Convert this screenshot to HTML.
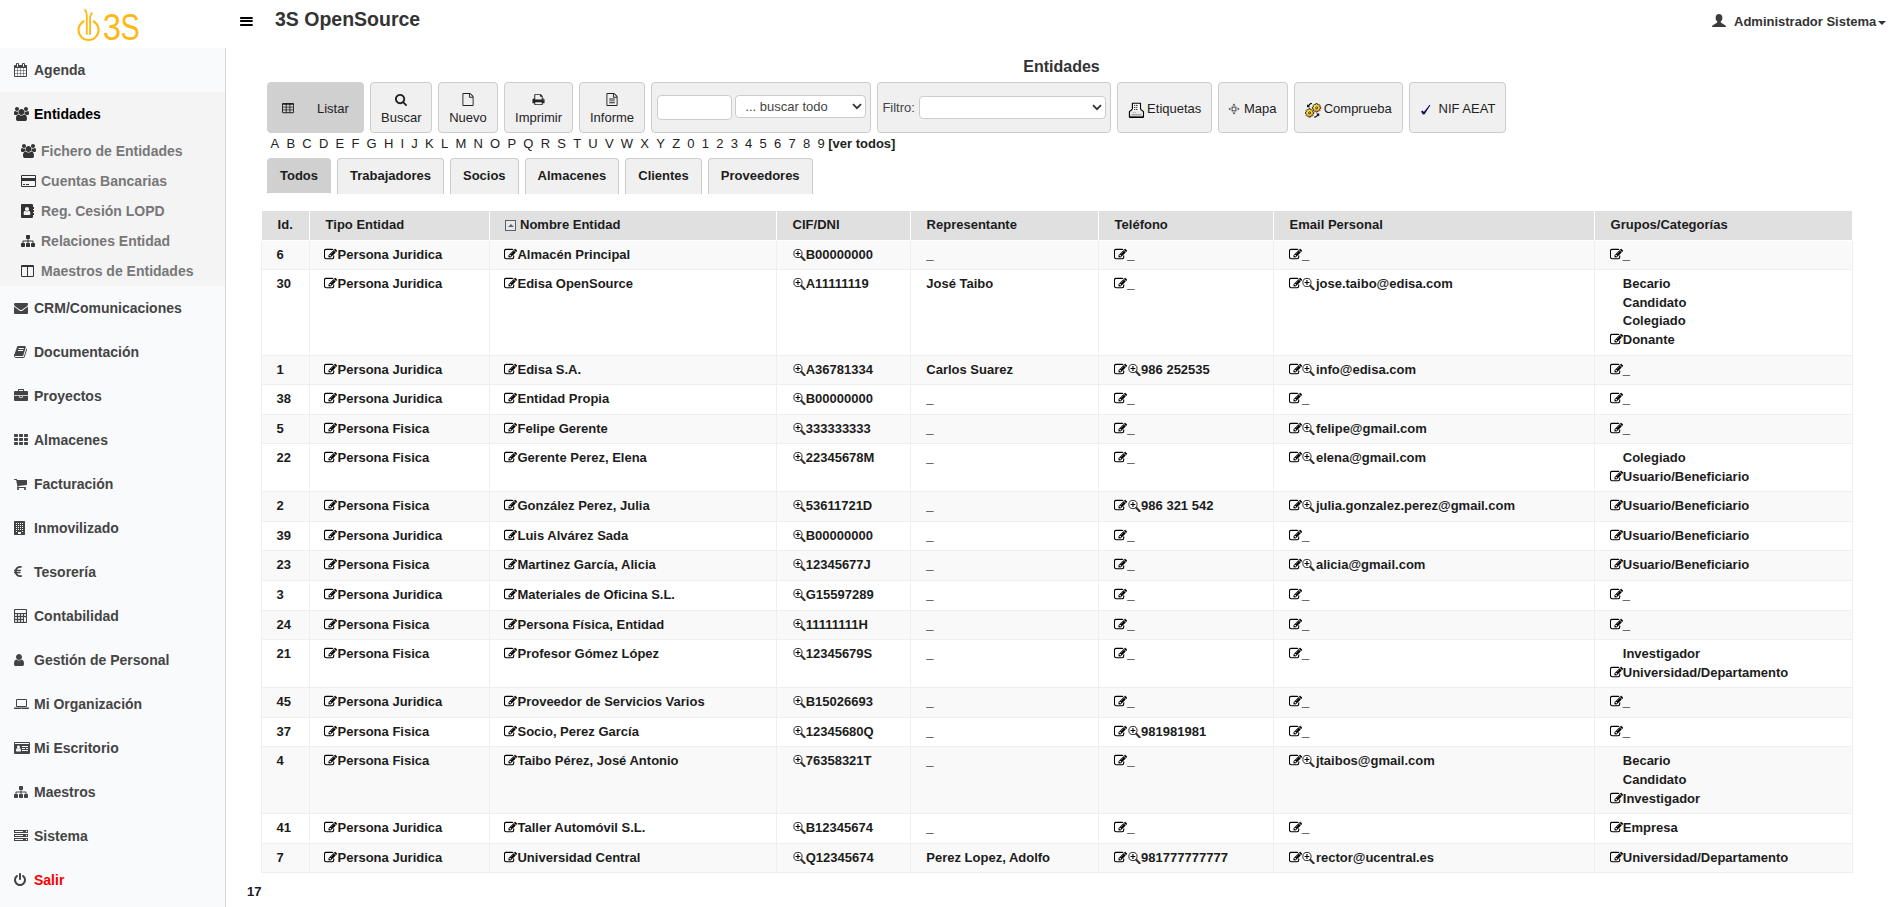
<!DOCTYPE html>
<html lang="es"><head><meta charset="utf-8"><title>3S OpenSource - Entidades</title>
<style>
*{box-sizing:border-box}
html,body{margin:0;padding:0}
body{width:1900px;height:907px;overflow:hidden;position:relative;background:#fff;font-family:"Liberation Sans",Arial,Helvetica,sans-serif;font-size:13px;line-height:1.42857;color:#1c1c1c}
a{color:inherit;text-decoration:none}
ul{list-style:none;margin:0;padding:0}
.fa{display:inline-block;background:currentColor;vertical-align:-0.143em;flex:none}
.i-calendar-14{width:13px;height:14px;clip-path:path("M1 13V10.75H3.25V13ZM3.75 13V10.75H6.25V13ZM1 10.25V7.75H3.25V10.25ZM3.75 10.25V7.75H6.25V10.25ZM1 7.25V5H3.25V7.25ZM6.75 13V10.75H9.25V13ZM3.75 7.25V5H6.25V7.25ZM9.75 13V10.75H12V13ZM6.75 10.25V7.75H9.25V10.25ZM4 3.5C4 3.63 3.88 3.75 3.75 3.75H3.25C3.12 3.75 3 3.63 3 3.5V1.25C3 1.12 3.12 1 3.25 1H3.75C3.88 1 4 1.12 4 1.25V3.5ZM9.75 10.25V7.75H12V10.25ZM6.75 7.25V5H9.25V7.25ZM9.75 7.25V5H12V7.25ZM10 3.5C10 3.63 9.88 3.75 9.75 3.75H9.25C9.12 3.75 9 3.63 9 3.5V1.25C9 1.12 9.12 1 9.25 1H9.75C9.88 1 10 1.12 10 1.25V3.5ZM13 3C13 2.45 12.55 2 12 2H11V1.25C11 0.56 10.44 0 9.75 0H9.25C8.56 0 8 0.56 8 1.25V2H5V1.25C5 0.56 4.44 0 3.75 0H3.25C2.56 0 2 0.56 2 1.25V2H1C0.45 2 0 2.45 0 3V13C0 13.55 0.45 14 1 14H12C12.55 14 13 13.55 13 13Z")}
.i-users-14{width:15px;height:14px;clip-path:path("M4.63 7C4.23 6.41 4 5.71 4 5C4 4.83 4.02 4.66 4.04 4.48C3.7 4.6 3.36 4.66 3 4.66C1.95 4.66 1.13 4 0.97 4C-0.02 4 0 6.12 0 6.76C0 7.62 0.73 8 1.52 8H2.56C3.09 7.38 3.82 7.02 4.63 7ZM13 11.98C13 10.21 12.59 7.5 10.3 7.5C10.03 7.5 9.06 8.59 7.5 8.59C5.94 8.59 4.97 7.5 4.7 7.5C2.41 7.5 2 10.21 2 11.98C2 13.24 2.84 14 4.09 14H10.91C12.16 14 13 13.24 13 11.98ZM5 2C5 0.9 4.1 0 3 0C1.9 0 1 0.9 1 2C1 3.1 1.9 4 3 4C4.1 4 5 3.1 5 2ZM10.5 5C10.5 3.34 9.16 2 7.5 2C5.84 2 4.5 3.34 4.5 5C4.5 6.66 5.84 8 7.5 8C9.16 8 10.5 6.66 10.5 5ZM15 6.76C15 6.12 15.02 4 14.03 4C13.87 4 13.05 4.66 12 4.66C11.64 4.66 11.3 4.6 10.96 4.48C10.98 4.66 11 4.83 11 5C11 5.71 10.77 6.41 10.37 7C11.18 7.02 11.91 7.38 12.44 8H13.48C14.27 8 15 7.62 15 6.76ZM14 2C14 0.9 13.1 0 12 0C10.9 0 10 0.9 10 2C10 3.1 10.9 4 12 4C13.1 4 14 3.1 14 2Z")}
.i-credit-card-14{width:15px;height:14px;clip-path:path("M13.75 1H1.25C0.56 1 0 1.56 0 2.25V11.75C0 12.44 0.56 13 1.25 13H13.75C14.44 13 15 12.44 15 11.75V2.25C15 1.56 14.44 1 13.75 1ZM1.25 2H13.75C13.88 2 14 2.12 14 2.25V4H1V2.25C1 2.12 1.12 2 1.25 2ZM13.75 12H1.25C1.12 12 1 11.88 1 11.75V7H14V11.75C14 11.88 13.88 12 13.75 12ZM2 11H4V10H2ZM5 11H8V10H5Z")}
.i-address-book-14{width:13px;height:14px;clip-path:path("M9.38 9.67C9.38 10.45 8.88 11 8.25 11H3.75C3.12 11 2.62 10.45 2.62 9.67C2.62 8.29 2.95 6.75 4.34 6.75C4.77 7 5.36 7.43 6 7.43C6.64 7.43 7.23 7 7.66 6.75C9.05 6.75 9.38 8.29 9.38 9.67ZM8.03 5.03C8.03 6.15 7.12 7.05 6 7.05C4.88 7.05 3.97 6.15 3.97 5.03C3.97 3.91 4.88 3 6 3C7.12 3 8.03 3.91 8.03 5.03ZM13 9.25C13 9.11 12.89 9 12.75 9H12V8H12.75C12.89 8 13 7.89 13 7.75V6.25C13 6.11 12.89 6 12.75 6H12V5H12.75C12.89 5 13 4.89 13 4.75V3.25C13 3.11 12.89 3 12.75 3H12V1.25C12 0.56 11.44 0 10.75 0H1.25C0.56 0 0 0.56 0 1.25V12.75C0 13.44 0.56 14 1.25 14H10.75C11.44 14 12 13.44 12 12.75V11H12.75C12.89 11 13 10.89 13 10.75Z")}
.i-sitemap-14{width:14px;height:14px;clip-path:path("M14 9.75C14 9.34 13.66 9 13.25 9H12.5V7.5C12.5 6.95 12.05 6.5 11.5 6.5H7.5V5H8.25C8.66 5 9 4.66 9 4.25V1.75C9 1.34 8.66 1 8.25 1H5.75C5.34 1 5 1.34 5 1.75V4.25C5 4.66 5.34 5 5.75 5H6.5V6.5H2.5C1.95 6.5 1.5 6.95 1.5 7.5V9H0.75C0.34 9 0 9.34 0 9.75V12.25C0 12.66 0.34 13 0.75 13H3.25C3.66 13 4 12.66 4 12.25V9.75C4 9.34 3.66 9 3.25 9H2.5V7.5H6.5V9H5.75C5.34 9 5 9.34 5 9.75V12.25C5 12.66 5.34 13 5.75 13H8.25C8.66 13 9 12.66 9 12.25V9.75C9 9.34 8.66 9 8.25 9H7.5V7.5H11.5V9H10.75C10.34 9 10 9.34 10 9.75V12.25C10 12.66 10.34 13 10.75 13H13.25C13.66 13 14 12.66 14 12.25Z")}
.i-columns-14{width:13px;height:14px;clip-path:path("M1.25 12C1.12 12 1 11.88 1 11.75V3H6V12ZM12 11.75C12 11.88 11.88 12 11.75 12H7V3H12V11.75ZM13 2.25C13 1.56 12.44 1 11.75 1H1.25C0.56 1 0 1.56 0 2.25V11.75C0 12.44 0.56 13 1.25 13H11.75C12.44 13 13 12.44 13 11.75Z")}
.i-envelope-14{width:14px;height:14px;clip-path:path("M14 5.55C13.77 5.8 13.5 6.03 13.22 6.23C11.91 7.11 10.6 8 9.33 8.92C8.67 9.41 7.86 10 7.01 10H7H6.99C6.14 10 5.33 9.41 4.67 8.92C3.4 7.99 2.09 7.11 0.79 6.23C0.5 6.03 0.23 5.8 0 5.55V11.75C0 12.44 0.56 13 1.25 13H12.75C13.44 13 14 12.44 14 11.75ZM14 3.25C14 2.56 13.43 2 12.75 2H1.25C0.41 2 0 2.66 0 3.42C0 4.13 0.79 5.02 1.34 5.39C2.55 6.23 3.78 7.08 4.99 7.93C5.5 8.28 6.36 9 6.99 9H7H7.01C7.64 9 8.5 8.28 9.01 7.93C10.22 7.08 11.45 6.23 12.66 5.39C13.35 4.91 14 4.12 14 3.25Z")}
.i-book-14{width:13px;height:14px;clip-path:path("M12.8 3.73C12.69 3.58 12.52 3.47 12.34 3.4C12.35 3.54 12.35 3.7 12.3 3.84L9.96 11.55C9.88 11.84 9.54 12 9.25 12H2.04C1.61 12 1.07 11.91 0.91 11.45C0.85 11.28 0.86 11.21 0.92 11.12C0.99 11.02 1.12 11 1.22 11H8.01C9 11 9.2 10.73 9.57 9.53L11.71 2.45C11.82 2.09 11.77 1.72 11.57 1.44C11.38 1.16 11.05 1 10.68 1H4.73C4.6 1 4.47 1.04 4.34 1.07L4.34 1.05C3.35 0.77 3.29 1.84 2.96 2.32C2.84 2.5 2.65 2.66 2.62 2.8C2.59 2.95 2.67 3.08 2.66 3.21C2.61 3.62 2.3 4.37 2.11 4.62C1.99 4.78 1.82 4.86 1.77 5.04C1.72 5.16 1.8 5.34 1.78 5.51C1.74 5.88 1.47 6.57 1.26 6.93C1.18 7.07 1.03 7.18 0.99 7.33C0.95 7.46 1.03 7.63 0.99 7.78C0.91 8.19 0.64 8.82 0.41 9.21C0.28 9.42 0.12 9.55 0.09 9.74C0.07 9.84 0.14 9.94 0.13 10.06C0.12 10.25 0.09 10.41 0.08 10.56C-0.03 10.86 -0.03 11.2 0.09 11.55C0.38 12.37 1.23 13 2.03 13H9.24C9.91 13 10.6 12.48 10.8 11.82L12.95 4.74C13.05 4.38 13 4.02 12.8 3.73ZM4.49 3.75 4.66 3.25C4.7 3.11 4.85 3 4.98 3H9.73C9.88 3 9.95 3.11 9.91 3.25L9.74 3.75C9.7 3.89 9.55 4 9.41 4H4.66C4.52 4 4.45 3.89 4.49 3.75ZM3.84 5.75 4.01 5.25C4.05 5.11 4.2 5 4.34 5H9.09C9.23 5 9.3 5.11 9.26 5.25L9.09 5.75C9.05 5.89 8.9 6 8.77 6H4.02C3.88 6 3.8 5.89 3.84 5.75Z")}
.i-briefcase-14{width:14px;height:14px;clip-path:path("M5 2V1H9V2ZM14 7H8.75V8.25C8.75 8.52 8.52 8.75 8.25 8.75H5.75C5.48 8.75 5.25 8.52 5.25 8.25V7H0V10.75C0 11.44 0.56 12 1.25 12H12.75C13.44 12 14 11.44 14 10.75ZM8 7H6V8H8ZM14 3.25C14 2.56 13.44 2 12.75 2H10V0.75C10 0.34 9.66 0 9.25 0H4.75C4.34 0 4 0.34 4 0.75V2H1.25C0.56 2 0 2.56 0 3.25V6.25H14Z")}
.i-th-14{width:14px;height:14px;clip-path:path("M4 9.75C4 9.34 3.66 9 3.25 9H0.75C0.34 9 0 9.34 0 9.75V11.25C0 11.66 0.34 12 0.75 12H3.25C3.66 12 4 11.66 4 11.25ZM4 5.75C4 5.34 3.66 5 3.25 5H0.75C0.34 5 0 5.34 0 5.75V7.25C0 7.66 0.34 8 0.75 8H3.25C3.66 8 4 7.66 4 7.25ZM9 9.75C9 9.34 8.66 9 8.25 9H5.75C5.34 9 5 9.34 5 9.75V11.25C5 11.66 5.34 12 5.75 12H8.25C8.66 12 9 11.66 9 11.25ZM4 1.75C4 1.34 3.66 1 3.25 1H0.75C0.34 1 0 1.34 0 1.75V3.25C0 3.66 0.34 4 0.75 4H3.25C3.66 4 4 3.66 4 3.25ZM9 5.75C9 5.34 8.66 5 8.25 5H5.75C5.34 5 5 5.34 5 5.75V7.25C5 7.66 5.34 8 5.75 8H8.25C8.66 8 9 7.66 9 7.25ZM14 9.75C14 9.34 13.66 9 13.25 9H10.75C10.34 9 10 9.34 10 9.75V11.25C10 11.66 10.34 12 10.75 12H13.25C13.66 12 14 11.66 14 11.25ZM9 1.75C9 1.34 8.66 1 8.25 1H5.75C5.34 1 5 1.34 5 1.75V3.25C5 3.66 5.34 4 5.75 4H8.25C8.66 4 9 3.66 9 3.25ZM14 5.75C14 5.34 13.66 5 13.25 5H10.75C10.34 5 10 5.34 10 5.75V7.25C10 7.66 10.34 8 10.75 8H13.25C13.66 8 14 7.66 14 7.25ZM14 1.75C14 1.34 13.66 1 13.25 1H10.75C10.34 1 10 1.34 10 1.75V3.25C10 3.66 10.34 4 10.75 4H13.25C13.66 4 14 3.66 14 3.25Z")}
.i-shopping-cart-14{width:13px;height:14px;clip-path:path("M5 12C5 11.45 4.55 11 4 11C3.45 11 3 11.45 3 12C3 12.55 3.45 13 4 13C4.55 13 5 12.55 5 12ZM12 12C12 11.45 11.55 11 11 11C10.45 11 10 11.45 10 12C10 12.55 10.45 13 11 13C11.55 13 12 12.55 12 12ZM13 3.5C13 3.23 12.77 3 12.5 3H3.12C3.04 2.62 3.02 2 2.5 2H0.5C0.23 2 0 2.23 0 2.5C0 2.77 0.23 3 0.5 3H2.09L3.48 9.43C3.35 9.67 3 10.26 3 10.5C3 10.77 3.23 11 3.5 11H11.5C11.77 11 12 10.77 12 10.5C12 10.23 11.77 10 11.5 10H4.31C4.39 9.84 4.5 9.68 4.5 9.5C4.5 9.31 4.44 9.13 4.4 8.95L12.55 8C12.8 7.97 13 7.75 13 7.5Z")}
.i-building-14{width:12px;height:14px;clip-path:path("M10.5 0H0.5C0.23 0 0 0.23 0 0.5V13.5C0 13.77 0.23 14 0.5 14H10.5C10.77 14 11 13.77 11 13.5V0.5C11 0.23 10.77 0 10.5 0ZM4 2.25C4 2.11 4.11 2 4.25 2H4.75C4.89 2 5 2.11 5 2.25V2.75C5 2.89 4.89 3 4.75 3H4.25C4.11 3 4 2.89 4 2.75ZM4 4.25C4 4.11 4.11 4 4.25 4H4.75C4.89 4 5 4.11 5 4.25V4.75C5 4.89 4.89 5 4.75 5H4.25C4.11 5 4 4.89 4 4.75ZM4 6.25C4 6.11 4.11 6 4.25 6H4.75C4.89 6 5 6.11 5 6.25V6.75C5 6.89 4.89 7 4.75 7H4.25C4.11 7 4 6.89 4 6.75ZM4 8.25C4 8.11 4.11 8 4.25 8H4.75C4.89 8 5 8.11 5 8.25V8.75C5 8.89 4.89 9 4.75 9H4.25C4.11 9 4 8.89 4 8.75ZM3 10.75C3 10.89 2.89 11 2.75 11H2.25C2.11 11 2 10.89 2 10.75V10.25C2 10.11 2.11 10 2.25 10H2.75C2.89 10 3 10.11 3 10.25ZM3 8.75C3 8.89 2.89 9 2.75 9H2.25C2.11 9 2 8.89 2 8.75V8.25C2 8.11 2.11 8 2.25 8H2.75C2.89 8 3 8.11 3 8.25ZM3 6.75C3 6.89 2.89 7 2.75 7H2.25C2.11 7 2 6.89 2 6.75V6.25C2 6.11 2.11 6 2.25 6H2.75C2.89 6 3 6.11 3 6.25ZM3 4.75C3 4.89 2.89 5 2.75 5H2.25C2.11 5 2 4.89 2 4.75V4.25C2 4.11 2.11 4 2.25 4H2.75C2.89 4 3 4.11 3 4.25ZM3 2.75C3 2.89 2.89 3 2.75 3H2.25C2.11 3 2 2.89 2 2.75V2.25C2 2.11 2.11 2 2.25 2H2.75C2.89 2 3 2.11 3 2.25ZM7 12.75C7 12.89 6.89 13 6.75 13H4.25C4.11 13 4 12.89 4 12.75V11.25C4 11.11 4.11 11 4.25 11H6.75C6.89 11 7 11.11 7 11.25ZM7 8.75C7 8.89 6.89 9 6.75 9H6.25C6.11 9 6 8.89 6 8.75V8.25C6 8.11 6.11 8 6.25 8H6.75C6.89 8 7 8.11 7 8.25ZM7 6.75C7 6.89 6.89 7 6.75 7H6.25C6.11 7 6 6.89 6 6.75V6.25C6 6.11 6.11 6 6.25 6H6.75C6.89 6 7 6.11 7 6.25ZM7 4.75C7 4.89 6.89 5 6.75 5H6.25C6.11 5 6 4.89 6 4.75V4.25C6 4.11 6.11 4 6.25 4H6.75C6.89 4 7 4.11 7 4.25ZM7 2.75C7 2.89 6.89 3 6.75 3H6.25C6.11 3 6 2.89 6 2.75V2.25C6 2.11 6.11 2 6.25 2H6.75C6.89 2 7 2.11 7 2.25ZM9 10.75C9 10.89 8.89 11 8.75 11H8.25C8.11 11 8 10.89 8 10.75V10.25C8 10.11 8.11 10 8.25 10H8.75C8.89 10 9 10.11 9 10.25ZM9 8.75C9 8.89 8.89 9 8.75 9H8.25C8.11 9 8 8.89 8 8.75V8.25C8 8.11 8.11 8 8.25 8H8.75C8.89 8 9 8.11 9 8.25ZM9 6.75C9 6.89 8.89 7 8.75 7H8.25C8.11 7 8 6.89 8 6.75V6.25C8 6.11 8.11 6 8.25 6H8.75C8.89 6 9 6.11 9 6.25ZM9 4.75C9 4.89 8.89 5 8.75 5H8.25C8.11 5 8 4.89 8 4.75V4.25C8 4.11 8.11 4 8.25 4H8.75C8.89 4 9 4.11 9 4.25ZM9 2.75C9 2.89 8.89 3 8.75 3H8.25C8.11 3 8 2.89 8 2.75V2.25C8 2.11 8.11 2 8.25 2H8.75C8.89 2 9 2.11 9 2.25Z")}
.i-eur-14{width:8px;height:14px;clip-path:path("M7.62 10.21C7.61 10.15 7.57 10.09 7.51 10.05C7.45 10.02 7.37 10.01 7.3 10.03C7.3 10.03 6.74 10.22 6.06 10.22C4.73 10.22 3.61 9.45 3.11 8.23H6.13C6.25 8.23 6.35 8.15 6.38 8.03L6.56 7.16C6.58 7.09 6.56 7.01 6.52 6.95C6.47 6.89 6.4 6.85 6.32 6.85H2.73C2.72 6.55 2.71 6.28 2.73 6.03H6.55C6.67 6.03 6.77 5.95 6.8 5.83L6.98 4.94C7 4.87 6.98 4.79 6.93 4.73C6.88 4.67 6.81 4.64 6.73 4.64H3.08C3.6 3.48 4.7 2.77 6.02 2.77C6.57 2.77 7.1 2.9 7.11 2.9C7.24 2.94 7.38 2.86 7.41 2.73L7.74 1.48C7.76 1.42 7.75 1.35 7.72 1.3C7.68 1.24 7.62 1.2 7.56 1.18C7.53 1.17 6.86 1 6.05 1C3.71 1 1.71 2.45 1.02 4.64H0.25C0.11 4.64 0 4.75 0 4.89V5.78C0 5.92 0.11 6.03 0.25 6.03H0.77C0.76 6.3 0.76 6.6 0.77 6.85H0.25C0.11 6.85 0 6.97 0 7.1V7.98C0 8.12 0.11 8.23 0.25 8.23H0.99C1.65 10.53 3.61 12 6.05 12C6.98 12 7.71 11.75 7.74 11.74C7.86 11.7 7.93 11.58 7.9 11.45Z")}
.i-calculator-14{width:14px;height:14px;clip-path:path("M3 12C3 12.55 2.55 13 2 13C1.45 13 1 12.55 1 12C1 11.45 1.45 11 2 11C2.55 11 3 11.45 3 12ZM6 12C6 12.55 5.55 13 5 13C4.45 13 4 12.55 4 12C4 11.45 4.45 11 5 11C5.55 11 6 11.45 6 12ZM3 9C3 9.55 2.55 10 2 10C1.45 10 1 9.55 1 9C1 8.45 1.45 8 2 8C2.55 8 3 8.45 3 9ZM9 12C9 12.55 8.55 13 8 13C7.45 13 7 12.55 7 12C7 11.45 7.45 11 8 11C8.55 11 9 11.45 9 12ZM6 9C6 9.55 5.55 10 5 10C4.45 10 4 9.55 4 9C4 8.45 4.45 8 5 8C5.55 8 6 8.45 6 9ZM3 6C3 6.55 2.55 7 2 7C1.45 7 1 6.55 1 6C1 5.45 1.45 5 2 5C2.55 5 3 5.45 3 6ZM9 9C9 9.55 8.55 10 8 10C7.45 10 7 9.55 7 9C7 8.45 7.45 8 8 8C8.55 8 9 8.45 9 9ZM6 6C6 6.55 5.55 7 5 7C4.45 7 4 6.55 4 6C4 5.45 4.45 5 5 5C5.55 5 6 5.45 6 6ZM12 12C12 12.55 11.55 13 11 13C10.45 13 10 12.55 10 12V9C10 8.45 10.45 8 11 8C11.55 8 12 8.45 12 9V12ZM9 6C9 6.55 8.55 7 8 7C7.45 7 7 6.55 7 6C7 5.45 7.45 5 8 5C8.55 5 9 5.45 9 6ZM12 3.5C12 3.77 11.77 4 11.5 4H1.5C1.23 4 1 3.77 1 3.5V1.5C1 1.23 1.23 1 1.5 1H11.5C11.77 1 12 1.23 12 1.5V3.5ZM12 6C12 6.55 11.55 7 11 7C10.45 7 10 6.55 10 6C10 5.45 10.45 5 11 5C11.55 5 12 5.45 12 6ZM13 1C13 0.45 12.55 0 12 0H1C0.45 0 0 0.45 0 1V13C0 13.55 0.45 14 1 14H12C12.55 14 13 13.55 13 13Z")}
.i-user-14{width:10px;height:14px;clip-path:path("M10 10.93C10 8.88 9.49 6.5 7.45 6.5C6.81 7.12 5.95 7.5 5 7.5C4.05 7.5 3.19 7.12 2.55 6.5C0.51 6.5 0 8.88 0 10.93C0 12.07 0.75 13 1.66 13H8.34C9.25 13 10 12.07 10 10.93ZM8 4C8 2.34 6.66 1 5 1C3.34 1 2 2.34 2 4C2 5.66 3.34 7 5 7C6.66 7 8 5.66 8 4Z")}
.i-laptop-14{width:15px;height:14px;clip-path:path("M3.25 10H11.75C12.44 10 13 9.44 13 8.75V3.25C13 2.56 12.44 2 11.75 2H3.25C2.56 2 2 2.56 2 3.25V8.75C2 9.44 2.56 10 3.25 10ZM3 3.25C3 3.12 3.12 3 3.25 3H11.75C11.88 3 12 3.12 12 3.25V8.75C12 8.88 11.88 9 11.75 9H3.25C3.12 9 3 8.88 3 8.75ZM13.75 10.5H1.25H0V11.25C0 11.66 0.56 12 1.25 12H13.75C14.44 12 15 11.66 15 11.25V10.5ZM8.12 11.25H6.88C6.8 11.25 6.75 11.2 6.75 11.12C6.75 11.05 6.8 11 6.88 11H8.12C8.2 11 8.25 11.05 8.25 11.12C8.25 11.2 8.2 11.25 8.12 11.25Z")}
.i-id-card-14{width:16px;height:14px;clip-path:path("M7 9.47C7 10.04 6.62 10.5 6.16 10.5H2.84C2.38 10.5 2 10.04 2 9.47C2 8.44 2.25 7.25 3.28 7.25C3.59 7.56 4.02 7.75 4.5 7.75C4.98 7.75 5.41 7.56 5.72 7.25C6.75 7.25 7 8.44 7 9.47ZM6 6C6 6.83 5.33 7.5 4.5 7.5C3.67 7.5 3 6.83 3 6C3 5.17 3.67 4.5 4.5 4.5C5.33 4.5 6 5.17 6 6ZM14 9.75C14 9.89 13.89 10 13.75 10H8.25C8.11 10 8 9.89 8 9.75V9.25C8 9.11 8.11 9 8.25 9H13.75C13.89 9 14 9.11 14 9.25V9.75ZM11 7.75C11 7.89 10.89 8 10.75 8H8.25C8.11 8 8 7.89 8 7.75V7.25C8 7.11 8.11 7 8.25 7H10.75C10.89 7 11 7.11 11 7.25V7.75ZM14 7.75C14 7.89 13.89 8 13.75 8H12.25C12.11 8 12 7.89 12 7.75V7.25C12 7.11 12.11 7 12.25 7H13.75C13.89 7 14 7.11 14 7.25V7.75ZM14 5.75C14 5.89 13.89 6 13.75 6H8.25C8.11 6 8 5.89 8 5.75V5.25C8 5.11 8.11 5 8.25 5H13.75C13.89 5 14 5.11 14 5.25V5.75ZM1 3V2.25C1 2.11 1.11 2 1.25 2H14.75C14.89 2 15 2.11 15 2.25V3ZM16 2.25C16 1.56 15.44 1 14.75 1H1.25C0.56 1 0 1.56 0 2.25V11.75C0 12.44 0.56 13 1.25 13H14.75C15.44 13 16 12.44 16 11.75Z")}
.i-server-14{width:14px;height:14px;clip-path:path("M1 11V10H9V11ZM1 7V6H9V7ZM13.25 10.5C13.25 10.91 12.91 11.25 12.5 11.25C12.09 11.25 11.75 10.91 11.75 10.5C11.75 10.09 12.09 9.75 12.5 9.75C12.91 9.75 13.25 10.09 13.25 10.5ZM1 3V2H9V3ZM13.25 6.5C13.25 6.91 12.91 7.25 12.5 7.25C12.09 7.25 11.75 6.91 11.75 6.5C11.75 6.09 12.09 5.75 12.5 5.75C12.91 5.75 13.25 6.09 13.25 6.5ZM13.25 2.5C13.25 2.91 12.91 3.25 12.5 3.25C12.09 3.25 11.75 2.91 11.75 2.5C11.75 2.09 12.09 1.75 12.5 1.75C12.91 1.75 13.25 2.09 13.25 2.5ZM14 9H0V12H14ZM14 5H0V8H14ZM14 1H0V4H14Z")}
.i-power-off-14{width:12px;height:14px;clip-path:path("M12 7C12 5.1 11.12 3.35 9.6 2.21C9.16 1.88 8.53 1.96 8.2 2.41C7.87 2.84 7.96 3.48 8.4 3.8C9.41 4.57 10 5.73 10 7C10 9.2 8.2 11 6 11C3.8 11 2 9.2 2 7C2 5.73 2.59 4.57 3.6 3.8C4.04 3.48 4.13 2.84 3.8 2.41C3.47 1.96 2.84 1.88 2.4 2.21C0.88 3.35 0 5.1 0 7C0 10.3 2.7 13 6 13C9.3 13 12 10.3 12 7ZM7 1C7 0.45 6.55 0 6 0C5.45 0 5 0.45 5 1V6C5 6.55 5.45 7 6 7C6.55 7 7 6.55 7 6Z")}
.i-table-13{width:12.07px;height:13px;clip-path:path("M3.71 9.98C3.71 10.11 3.61 10.21 3.48 10.21H1.16C1.03 10.21 0.93 10.11 0.93 9.98V8.59C0.93 8.46 1.03 8.36 1.16 8.36H3.48C3.61 8.36 3.71 8.46 3.71 8.59V9.98ZM3.71 7.2C3.71 7.33 3.61 7.43 3.48 7.43H1.16C1.03 7.43 0.93 7.33 0.93 7.2V5.8C0.93 5.67 1.03 5.57 1.16 5.57H3.48C3.61 5.57 3.71 5.67 3.71 5.8V7.2ZM7.43 9.98C7.43 10.11 7.33 10.21 7.2 10.21H4.88C4.74 10.21 4.64 10.11 4.64 9.98V8.59C4.64 8.46 4.74 8.36 4.88 8.36H7.2C7.33 8.36 7.43 8.46 7.43 8.59V9.98ZM3.71 4.41C3.71 4.54 3.61 4.64 3.48 4.64H1.16C1.03 4.64 0.93 4.54 0.93 4.41V3.02C0.93 2.89 1.03 2.79 1.16 2.79H3.48C3.61 2.79 3.71 2.89 3.71 3.02V4.41ZM7.43 7.2C7.43 7.33 7.33 7.43 7.2 7.43H4.88C4.74 7.43 4.64 7.33 4.64 7.2V5.8C4.64 5.67 4.74 5.57 4.88 5.57H7.2C7.33 5.57 7.43 5.67 7.43 5.8V7.2ZM11.14 9.98C11.14 10.11 11.04 10.21 10.91 10.21H8.59C8.46 10.21 8.36 10.11 8.36 9.98V8.59C8.36 8.46 8.46 8.36 8.59 8.36H10.91C11.04 8.36 11.14 8.46 11.14 8.59V9.98ZM7.43 4.41C7.43 4.54 7.33 4.64 7.2 4.64H4.88C4.74 4.64 4.64 4.54 4.64 4.41V3.02C4.64 2.89 4.74 2.79 4.88 2.79H7.2C7.33 2.79 7.43 2.89 7.43 3.02V4.41ZM11.14 7.2C11.14 7.33 11.04 7.43 10.91 7.43H8.59C8.46 7.43 8.36 7.33 8.36 7.2V5.8C8.36 5.67 8.46 5.57 8.59 5.57H10.91C11.04 5.57 11.14 5.67 11.14 5.8V7.2ZM11.14 4.41C11.14 4.54 11.04 4.64 10.91 4.64H8.59C8.46 4.64 8.36 4.54 8.36 4.41V3.02C8.36 2.89 8.46 2.79 8.59 2.79H10.91C11.04 2.79 11.14 2.89 11.14 3.02V4.41ZM12.07 2.09C12.07 1.45 11.55 0.93 10.91 0.93H1.16C0.52 0.93 0 1.45 0 2.09V9.98C0 10.62 0.52 11.14 1.16 11.14H10.91C11.55 11.14 12.07 10.62 12.07 9.98Z")}
.i-search-13{width:12.07px;height:13px;clip-path:path("M8.36 6.04C8.36 7.83 6.9 9.29 5.11 9.29C3.32 9.29 1.86 7.83 1.86 6.04C1.86 4.24 3.32 2.79 5.11 2.79C6.9 2.79 8.36 4.24 8.36 6.04ZM12.07 12.07C12.07 11.82 11.97 11.59 11.8 11.42L9.31 8.93C9.9 8.08 10.21 7.07 10.21 6.04C10.21 3.21 7.93 0.93 5.11 0.93C2.29 0.93 0 3.21 0 6.04C0 8.86 2.29 11.14 5.11 11.14C6.14 11.14 7.15 10.83 8 10.24L10.49 12.72C10.66 12.9 10.9 13 11.14 13C11.65 13 12.07 12.58 12.07 12.07Z")}
.i-file-o-13{width:11.14px;height:13px;clip-path:path("M10.65 2.76 8.39 0.49C8.12 0.22 7.58 0 7.2 0H0.7C0.31 0 0 0.31 0 0.7V12.3C0 12.69 0.31 13 0.7 13H10.45C10.83 13 11.14 12.69 11.14 12.3V3.95C11.14 3.56 10.92 3.03 10.65 2.76ZM7.43 0.99C7.55 1.03 7.68 1.1 7.73 1.15L10 3.42C10.05 3.47 10.11 3.59 10.16 3.71H7.43ZM10.21 12.07H0.93V0.93H6.5V3.95C6.5 4.33 6.81 4.64 7.2 4.64H10.21Z")}
.i-print-13{width:12.07px;height:13px;clip-path:path("M2.79 11.14V9.29H9.29V11.14ZM2.79 6.5V1.86H7.43V3.02C7.43 3.4 7.74 3.71 8.12 3.71H9.29V6.5ZM11.14 6.96C11.14 7.22 10.93 7.43 10.68 7.43C10.42 7.43 10.21 7.22 10.21 6.96C10.21 6.71 10.42 6.5 10.68 6.5C10.93 6.5 11.14 6.71 11.14 6.96ZM12.07 6.96C12.07 6.2 11.44 5.57 10.68 5.57H10.21V3.71C10.21 3.33 10 2.8 9.72 2.52L8.62 1.42C8.34 1.15 7.81 0.93 7.43 0.93H2.55C2.17 0.93 1.86 1.24 1.86 1.62V5.57H1.39C0.63 5.57 0 6.2 0 6.96V9.98C0 10.11 0.11 10.21 0.23 10.21H1.86V11.38C1.86 11.76 2.17 12.07 2.55 12.07H9.52C9.9 12.07 10.21 11.76 10.21 11.38V10.21H11.84C11.96 10.21 12.07 10.11 12.07 9.98Z")}
.i-file-text-o-13{width:11.14px;height:13px;clip-path:path("M10.65 2.76 8.39 0.49C8.12 0.22 7.58 0 7.2 0H0.7C0.31 0 0 0.31 0 0.7V12.3C0 12.69 0.31 13 0.7 13H10.45C10.83 13 11.14 12.69 11.14 12.3V3.95C11.14 3.56 10.92 3.03 10.65 2.76ZM7.43 0.99C7.55 1.03 7.68 1.1 7.73 1.15L10 3.42C10.05 3.47 10.11 3.59 10.16 3.71H7.43ZM10.21 12.07H0.93V0.93H6.5V3.95C6.5 4.33 6.81 4.64 7.2 4.64H10.21ZM2.79 5.8V6.27C2.79 6.4 2.89 6.5 3.02 6.5H8.12C8.26 6.5 8.36 6.4 8.36 6.27V5.8C8.36 5.67 8.26 5.57 8.12 5.57H3.02C2.89 5.57 2.79 5.67 2.79 5.8ZM8.12 7.43H3.02C2.89 7.43 2.79 7.53 2.79 7.66V8.12C2.79 8.26 2.89 8.36 3.02 8.36H8.12C8.26 8.36 8.36 8.26 8.36 8.12V7.66C8.36 7.53 8.26 7.43 8.12 7.43ZM8.12 9.29H3.02C2.89 9.29 2.79 9.39 2.79 9.52V9.98C2.79 10.11 2.89 10.21 3.02 10.21H8.12C8.26 10.21 8.36 10.11 8.36 9.98V9.52C8.36 9.39 8.26 9.29 8.12 9.29Z")}
/* sidebar */
#logo{position:absolute;left:0;top:0;width:226px;height:48px;background:#fff}
#side{position:absolute;left:0;top:48px;width:226px;height:859px;background:#f9fafc;border-right:1px solid #d2d6de}
#side li.mi>a{display:flex;align-items:center;height:44px;padding-left:14px;font-size:14px;font-weight:bold;color:#444}
#side .ic{display:inline-block;width:20px;line-height:0}
#side .ic .fa{vertical-align:top}
#side li.act{background:#f4f4f5}
#side li.act>a{color:#000}
#side li.act>a .ic{color:#333}
#side .lb{position:relative;top:1px}
#side li.salir .lb{color:#f00}
#side .sub{padding-bottom:0}
#side .sub a{display:flex;align-items:center;height:30px;padding-left:21px;font-size:14px;font-weight:bold;color:#777}
#side .sub .ic{color:#333}
/* header */
#burger{position:absolute;left:240.4px;top:17px;line-height:0}
#brand{position:absolute;left:275px;top:8px;font-size:19.5px;font-weight:bold;color:#333;line-height:22px;white-space:nowrap}
#user{position:absolute;left:1712px;top:12px;height:18px;white-space:nowrap;font-weight:bold;color:#333;line-height:18px}
#user svg{position:absolute;left:0;top:2px}
#user span{position:absolute;left:22px;top:1px}
#user i.caret{position:absolute;left:166px;top:9px;width:0;height:0;border-left:4px solid transparent;border-right:4px solid transparent;border-top:4px solid #333}
#title{position:absolute;left:961.5px;width:200px;text-align:center;top:56px;font-size:16px;font-weight:bold;color:#333;line-height:22px}
/* toolbar */
#tools{position:absolute;left:267px;top:82px;height:51px;white-space:nowrap;font-size:0}
.btn{display:inline-block;vertical-align:top;height:51px;margin-right:6px;border:1px solid #ccc;border-radius:4px;background:#f0f0f0;font-size:13px;color:#222;text-align:center;padding:6px 10px;position:relative}
.btn .fa{display:block;margin:4px auto 0;vertical-align:top}
.btn .t{display:block;line-height:18px;margin-top:3px}
.btn.act{background:#d0d0d0;border-color:#d0d0d0}
.btn.one{line-height:37px;padding:0 10px}
.btn.one svg{vertical-align:middle;margin-right:2px;position:relative;top:-1px}
.grp{padding:0}
.btn.ab{padding:0}
.btn.ab svg{position:absolute}
.btn.ab span svg{position:static}
.btn.ab .t1{position:absolute;top:17px;line-height:18px;white-space:nowrap}
input.q{position:absolute;left:5px;top:12px;width:75px;height:25px;border:1px solid #ccc;border-radius:4px;background:#fff}
.sel{position:absolute;height:23px;border:1px solid #ccc;border-radius:4px;background:#fff;font-size:13px;color:#444;text-align:left;line-height:21px;padding-left:9.4px}
.sel svg{position:absolute;right:3px;top:7px}
/* alpha */
#alpha{position:absolute;left:270.5px;top:134px;white-space:nowrap;color:#222;line-height:19px;font-size:13px}
#alpha a{margin-right:7.22px}
#alpha b{margin-left:-3.6px}
/* tabs */
#tabs{position:absolute;left:267px;top:158px;white-space:nowrap;font-size:0}
.tab{display:inline-block;height:36px;margin-right:6px;border:1px solid #ccc;border-bottom:0;border-radius:4px 4px 0 0;background:#f0f0f0;font-size:13px;font-weight:bold;color:#1c1c1c;padding:7px 12px 0;line-height:19px}
.tab.act{background:#d0d0d0;border-color:#d0d0d0;border-bottom:1px solid #fff}
/* table */
#tbl{position:absolute;left:261px;top:210.7px;width:1592px;border-collapse:separate;border-spacing:0;table-layout:fixed;font-weight:bold}
#tbl th{background:#e0e0e0;text-align:left;padding:5px 10px 0 15.6px;height:29px;border-left:1px solid #fff;vertical-align:top;white-space:nowrap}
#tbl th:last-child{border-right:1px solid #fff}
#tbl td{padding:5px 10px 5px 14.6px;border-top:1px solid #efefef;border-left:1px solid #efefef;vertical-align:top;white-space:nowrap}
#tbl td:last-child{border-right:1px solid #efefef}
#tbl td:nth-child(2),#tbl td:nth-child(3){padding-left:14.3px}
#tbl td:nth-child(4){padding-left:15.55px}
#tbl td:nth-child(5){padding-left:15.3px}
#tbl td:nth-child(6){padding-left:15px}
#tbl td:nth-child(7){padding-left:14.8px}
#tbl td:nth-child(8){padding-left:14.6px}
#tbl tr:first-child td{border-top-color:#fff}
#tbl tr:nth-child(odd) td{background:#f9f9f9}
#tbl td .ed{margin-right:0.2px;position:relative;top:var(--d,0px);vertical-align:-1.86px}
#tbl .zm{vertical-align:-1.86px;position:relative;top:var(--d,0px)}
#tbl .ed+.zm{margin-left:0.35px;margin-right:0.4px}
#tbl .us{font-weight:normal;color:#555;position:relative;top:-1px}
#tbl .ind{padding-left:13.2px}
#tbl tr:last-child td{border-bottom:1px solid #efefef}
#tbl .sort{display:inline-block;width:11px;height:11px;border:1px solid #56606b;background:#e8e8e8;vertical-align:-2.5px;margin-right:4px;margin-left:-0.6px;position:relative}
#tbl .sort:after{content:"";position:absolute;left:1.5px;top:3px;border-left:3px solid transparent;border-right:3px solid transparent;border-bottom:3.5px solid #5b6672}
#count{position:absolute;left:247px;top:882px;font-weight:bold;line-height:19px}
</style></head><body>
<div id="logo">
<svg width="226" height="48" viewBox="0 0 226 48">
<circle cx="88.55" cy="30.05" r="10.05" fill="none" stroke="#fdb813" stroke-width="2"/>
<rect x="84.3" y="18" width="8.6" height="4" fill="#fff"/>
<path d="M84.3 9.5c2.2 1.5 2.5 3.5 2.5 7V34.7" fill="none" stroke="#fdb813" stroke-width="1.8"/>
<path d="M92.6 12.8c-2.200 1.300-2.500 3-2.500 6V34.700" fill="none" stroke="#fdb813" stroke-width="1.800"/>
<g font-family="Liberation Sans, Arial, sans-serif" font-size="36.5" fill="#fdb813"><text transform="translate(102.7,40.1) scale(0.9,1)">3</text><text transform="translate(120.6,40.1) scale(0.79,1)">S</text></g>
</svg>
</div>
<div id="side"><ul>
<li class="mi"><a><span class="ic"><i class="fa i-calendar-14 "></i></span><span class="lb">Agenda</span></a>
</li>
<li class="mi act"><a><span class="ic"><i class="fa i-users-14 "></i></span><span class="lb">Entidades</span></a>
<ul class="sub">
<li><a><span class="ic"><i class="fa i-users-14 "></i></span><span class="lb">Fichero de Entidades</span></a></li>
<li><a><span class="ic"><i class="fa i-credit-card-14 "></i></span><span class="lb">Cuentas Bancarias</span></a></li>
<li><a><span class="ic"><i class="fa i-address-book-14 "></i></span><span class="lb">Reg. Cesión LOPD</span></a></li>
<li><a><span class="ic"><i class="fa i-sitemap-14 "></i></span><span class="lb">Relaciones Entidad</span></a></li>
<li><a><span class="ic"><i class="fa i-columns-14 "></i></span><span class="lb">Maestros de Entidades</span></a></li>
</ul>
</li>
<li class="mi"><a><span class="ic"><i class="fa i-envelope-14 "></i></span><span class="lb">CRM/Comunicaciones</span></a>
</li>
<li class="mi"><a><span class="ic"><i class="fa i-book-14 "></i></span><span class="lb">Documentación</span></a>
</li>
<li class="mi"><a><span class="ic"><i class="fa i-briefcase-14 "></i></span><span class="lb">Proyectos</span></a>
</li>
<li class="mi"><a><span class="ic"><i class="fa i-th-14 "></i></span><span class="lb">Almacenes</span></a>
</li>
<li class="mi"><a><span class="ic"><i class="fa i-shopping-cart-14 "></i></span><span class="lb">Facturación</span></a>
</li>
<li class="mi"><a><span class="ic"><i class="fa i-building-14 "></i></span><span class="lb">Inmovilizado</span></a>
</li>
<li class="mi"><a><span class="ic"><i class="fa i-eur-14 "></i></span><span class="lb">Tesorería</span></a>
</li>
<li class="mi"><a><span class="ic"><i class="fa i-calculator-14 "></i></span><span class="lb">Contabilidad</span></a>
</li>
<li class="mi"><a><span class="ic"><i class="fa i-user-14 "></i></span><span class="lb">Gestión de Personal</span></a>
</li>
<li class="mi"><a><span class="ic"><i class="fa i-laptop-14 "></i></span><span class="lb">Mi Organización</span></a>
</li>
<li class="mi"><a><span class="ic"><i class="fa i-id-card-14 "></i></span><span class="lb">Mi Escritorio</span></a>
</li>
<li class="mi"><a><span class="ic"><i class="fa i-sitemap-14 "></i></span><span class="lb">Maestros</span></a>
</li>
<li class="mi"><a><span class="ic"><i class="fa i-server-14 "></i></span><span class="lb">Sistema</span></a>
</li>
<li class="mi salir"><a><span class="ic"><i class="fa i-power-off-14 "></i></span><span class="lb">Salir</span></a>
</li>
</ul></div>
<div id="burger"><svg width="13" height="10" viewBox="0 0 13 10"><rect x="0" y="0" width="12.8" height="2" rx=".7"/><rect x="0" y="3" width="12.8" height="2" rx=".7"/><rect x="0" y="7" width="12.8" height="2" rx=".7"/></svg></div>
<div id="brand">3S OpenSource</div>
<div id="user"><svg width="14" height="14" viewBox="0 0 14 14"><path fill="#3c3c3c" d="M7 0C9.1 0 10.4 1.5 10.4 3.7C10.4 5.3 9.8 6.7 8.8 7.4V8.4L13.5 11.4Q13.9 11.7 13.9 12.3V12.9H.1V12.3Q.1 11.7 .5 11.4L5.2 8.4V7.4C4.2 6.7 3.6 5.3 3.6 3.7C3.6 1.5 4.9 0 7 0z"/></svg><span>Administrador Sistema</span><i class="caret"></i></div>
<div id="title">Entidades</div>
<div id="tools">
<a class="btn act" style="width:97px;text-align:left;padding:0;line-height:49px"><span style="position:absolute;left:14px;top:15px;line-height:0"><i class="fa i-table-13 "></i></span><span style="position:absolute;left:49px;top:1px">Listar</span></a>
<a class="btn" style="width:62px"><i class="fa i-search-13 "></i><span class="t">Buscar</span></a>
<a class="btn" style="width:60px"><i class="fa i-file-o-13 "></i><span class="t">Nuevo</span></a>
<a class="btn" style="width:69px"><i class="fa i-print-13 "></i><span class="t">Imprimir</span></a>
<a class="btn" style="width:66px"><i class="fa i-file-text-o-13 "></i><span class="t">Informe</span></a>
<span class="btn grp" style="width:220px"><input class="q" type="text"><span class="sel" style="left:83px;top:12px;width:131px">... buscar todo<svg width="10" height="7" viewBox="0 0 10 7"><path d="M1 1.2L5 5.2L9 1.2" fill="none" stroke="#333" stroke-width="1.8"/></svg></span></span>
<span class="btn grp" style="width:234px"><span style="position:absolute;left:4.4px;top:15px;line-height:19px;color:#444">Filtro:</span><span class="sel" style="left:41px;top:13px;width:187px"><svg width="10" height="7" viewBox="0 0 10 7"><path d="M1 1.2L5 5.2L9 1.2" fill="none" stroke="#333" stroke-width="1.8"/></svg></span></span>
<a class="btn ab" style="width:95px"><svg style="left:10px;top:19px" width="17" height="17" viewBox="0 0 17 17"><path d="M4.4 7.300V1.300h8.100v6" fill="#fff" stroke="#000" stroke-width="1.1"/><path d="M4.400 7.300L1.400 9.600v5.400h14.100V9.600L12.500 7.300" fill="#e9e9e9" stroke="#000" stroke-width="1.1" stroke-linejoin="round"/><path d="M4.900 7.800h7.100" stroke="#fff" stroke-width="1.200"/><path d="M6.100 3.400h0.900M7.700 3.400h2M5.900 5.400h1.500M8.200 5.400h1.200M6.100 7.400h0.900M7.700 7.400h1.800" stroke="#111" stroke-width="0.9"/><path d="M1.400 15.200h14.100" stroke="#000" stroke-width="1.600"/><path d="M3.600 12.800h9.800" stroke="#777" stroke-width="0.8"/><path d="M2.200 13.800h12.500" stroke="#c8c8c8" stroke-width="1"/><circle cx="5.400" cy="10.400" r="0.500" fill="#999"/><circle cx="7.400" cy="10.400" r="0.500" fill="#999"/></svg><span class="t1" style="left:29.1px">Etiquetas</span></a>
<a class="btn ab" style="width:70px"><svg style="left:9.4px;top:20.4px" width="12" height="12" viewBox="0 0 12 12"><rect x="4.100" y="4.100" width="3.800" height="3.800" fill="#f4f4f4" stroke="#444" stroke-width="1"/><path d="M6 0.400L7.600 2.400H4.400zM6 11.600L7.600 9.600H4.400zM0.400 6L2.400 4.400v3.200zM11.600 6L9.600 4.400v3.200z" fill="#444"/></svg><span class="t1" style="left:24.9px">Mapa</span></a>
<a class="btn ab" style="width:109px"><span style="position:absolute;left:9.500px;top:19.600px;line-height:0"><svg width="17" height="15" viewBox="0 0 17 15"><linearGradient id="gy" x1="0" y1="0" x2="1" y2="1"><stop offset="0.2" stop-color="#fff640"/><stop offset="1" stop-color="#ff9408"/></linearGradient><path d="M15.84 4.06L15.84 5.54L14.91 5.59L14.50 6.58L15.12 7.27L14.07 8.32L13.38 7.70L12.39 8.11L12.34 9.04L10.86 9.04L10.81 8.11L9.82 7.70L9.13 8.32L8.08 7.27L8.70 6.58L8.29 5.59L7.36 5.54L7.36 4.06L8.29 4.01L8.70 3.02L8.08 2.33L9.13 1.28L9.82 1.90L10.81 1.49L10.86 0.56L12.34 0.56L12.39 1.49L13.38 1.90L14.07 1.28L15.12 2.33L14.50 3.02L14.91 4.01z" fill="url(#gy)" stroke="#0c0818" stroke-width="0.75" stroke-linejoin="round"/><circle cx="11.6" cy="4.8" r="1" fill="#fff" stroke="#000" stroke-width="0.8"/><path d="M8.84 9.16L8.84 10.64L7.91 10.69L7.50 11.68L8.12 12.37L7.07 13.42L6.38 12.80L5.39 13.21L5.34 14.14L3.86 14.14L3.81 13.21L2.82 12.80L2.13 13.42L1.08 12.37L1.70 11.68L1.29 10.69L0.36 10.64L0.36 9.16L1.29 9.11L1.70 8.12L1.08 7.43L2.13 6.38L2.82 7.00L3.81 6.59L3.86 5.66L5.34 5.66L5.39 6.59L6.38 7.00L7.07 6.38L8.12 7.43L7.50 8.12L7.91 9.11z" fill="url(#gy)" stroke="#0c0818" stroke-width="0.75" stroke-linejoin="round"/><circle cx="4.6" cy="9.9" r="1" fill="#fff" stroke="#000" stroke-width="0.8"/><path d="M6.900 0.500L5.600 0.600L3.300 3" stroke="#000" stroke-width="1.1" fill="none"/><path d="M2.100 1.300V4.300H5.100z" fill="#000"/><path d="M9.300 14.100L10.700 13.900L13 11.800" stroke="#000" stroke-width="1.1" fill="none"/><path d="M14.200 13.500V10.500H11.200z" fill="#000"/></svg></span><span class="t1" style="left:28.7px">Comprueba</span></a>
<a class="btn ab" style="width:97px;margin-right:0"><svg style="left:10px;top:21px" width="12" height="12" viewBox="0 0 12 12"><path d="M1 7.600L2.800 6.500L3.800 8L9.600 0.700L10.400 1.200L4.600 10.300L2.900 10.600z" fill="#10105a"/></svg><span class="t1" style="left:28.5px">NIF AEAT</span></a>
</div>
<div id="alpha"><a>A</a><a>B</a><a>C</a><a>D</a><a>E</a><a>F</a><a>G</a><a>H</a><a>I</a><a>J</a><a>K</a><a>L</a><a>M</a><a>N</a><a>O</a><a>P</a><a>Q</a><a>R</a><a>S</a><a>T</a><a>U</a><a>V</a><a>W</a><a>X</a><a>Y</a><a>Z</a><a>0</a><a>1</a><a>2</a><a>3</a><a>4</a><a>5</a><a>6</a><a>7</a><a>8</a><a>9</a><b>[ver todos]</b></div>
<div id="tabs"><a class="tab act">Todos</a><a class="tab">Trabajadores</a><a class="tab">Socios</a><a class="tab">Almacenes</a><a class="tab">Clientes</a><a class="tab">Proveedores</a></div>
<table id="tbl"><colgroup><col style="width:48px"><col style="width:180px"><col style="width:287px"><col style="width:134px"><col style="width:188px"><col style="width:175px"><col style="width:321px"><col style="width:259px"></colgroup>
<thead><tr><th>Id.</th><th>Tipo Entidad</th><th><span class="sort"></span>Nombre Entidad</th><th>CIF/DNI</th><th>Representante</th><th>Teléfono</th><th>Email Personal</th><th>Grupos/Categorías</th></tr></thead>
<tbody>
<tr style="--d:0.45px"><td>6</td><td><svg class="ed" width="13" height="13" viewBox="0 0 14 14"><path d="M9.5 1.6Q9.1 1.5 8.75 1.5H2.25Q.5 1.5 .5 3.25V9.75Q.5 11.5 2.25 11.5H8.75Q10.5 11.5 10.5 9.75V8.5" fill="none" stroke="#000" stroke-width="1.18" stroke-linecap="round"/><path d="M10.25 2.5L5 7.75V10H7.25L12.5 4.75zM13.72 3.53a.75.75 0 0 0 0-1.06L12.53 1.28a.75.75 0 0 0-1.06 0L10.75 2 13 4.25z" stroke="#000" stroke-width=".25"/><path d="M6.94 9.25H6.5V8.5H5.75V8.06L6.66 7.16 7.84 8.34z" fill="#fff"/><path d="M7.5 6.5L10.25 3.75" stroke="#fff" stroke-width=".35"/></svg>Persona Juridica</td><td><svg class="ed" width="13" height="13" viewBox="0 0 14 14"><path d="M9.5 1.6Q9.1 1.5 8.75 1.5H2.25Q.5 1.5 .5 3.25V9.75Q.5 11.5 2.25 11.5H8.75Q10.5 11.5 10.5 9.75V8.5" fill="none" stroke="#000" stroke-width="1.18" stroke-linecap="round"/><path d="M10.25 2.5L5 7.75V10H7.25L12.5 4.75zM13.72 3.53a.75.75 0 0 0 0-1.06L12.53 1.28a.75.75 0 0 0-1.06 0L10.75 2 13 4.25z" stroke="#000" stroke-width=".25"/><path d="M6.94 9.25H6.5V8.5H5.75V8.06L6.66 7.16 7.84 8.34z" fill="#fff"/><path d="M7.5 6.5L10.25 3.75" stroke="#fff" stroke-width=".35"/></svg>Almacén Principal</td><td><svg class="zm" width="13.2" height="13" viewBox="0 0 13.2 13"><circle cx="4.95" cy="5.5" r="4.1" fill="#fff" stroke="#2a2a2a" stroke-width="1"/><path d="M4.95 3.1V7.9M2.55 5.5H7.35" stroke="#000" stroke-width="1.1" fill="none"/><path d="M8.3 8.7L11.6 12.2" stroke="#333" stroke-width="2.1" stroke-linecap="round"/></svg>B00000000</td><td><span class="us">_</span></td><td><svg class="ed" width="13" height="13" viewBox="0 0 14 14"><path d="M9.5 1.6Q9.1 1.5 8.75 1.5H2.25Q.5 1.5 .5 3.25V9.75Q.5 11.5 2.25 11.5H8.75Q10.5 11.5 10.5 9.75V8.5" fill="none" stroke="#000" stroke-width="1.18" stroke-linecap="round"/><path d="M10.25 2.5L5 7.75V10H7.25L12.5 4.75zM13.72 3.53a.75.75 0 0 0 0-1.06L12.53 1.28a.75.75 0 0 0-1.06 0L10.75 2 13 4.25z" stroke="#000" stroke-width=".25"/><path d="M6.94 9.25H6.5V8.5H5.75V8.06L6.66 7.16 7.84 8.34z" fill="#fff"/><path d="M7.5 6.5L10.25 3.75" stroke="#fff" stroke-width=".35"/></svg><span class="us">_</span></td><td><svg class="ed" width="13" height="13" viewBox="0 0 14 14"><path d="M9.5 1.6Q9.1 1.5 8.75 1.5H2.25Q.5 1.5 .5 3.25V9.75Q.5 11.5 2.25 11.5H8.75Q10.5 11.5 10.5 9.75V8.5" fill="none" stroke="#000" stroke-width="1.18" stroke-linecap="round"/><path d="M10.25 2.5L5 7.75V10H7.25L12.5 4.75zM13.72 3.53a.75.75 0 0 0 0-1.06L12.53 1.28a.75.75 0 0 0-1.06 0L10.75 2 13 4.25z" stroke="#000" stroke-width=".25"/><path d="M6.94 9.25H6.5V8.5H5.75V8.06L6.66 7.16 7.84 8.34z" fill="#fff"/><path d="M7.5 6.5L10.25 3.75" stroke="#fff" stroke-width=".35"/></svg><span class="us">_</span></td><td><svg class="ed" width="13" height="13" viewBox="0 0 14 14"><path d="M9.5 1.6Q9.1 1.5 8.75 1.5H2.25Q.5 1.5 .5 3.25V9.75Q.5 11.5 2.25 11.5H8.75Q10.5 11.5 10.5 9.75V8.5" fill="none" stroke="#000" stroke-width="1.18" stroke-linecap="round"/><path d="M10.25 2.5L5 7.75V10H7.25L12.5 4.75zM13.72 3.53a.75.75 0 0 0 0-1.06L12.53 1.28a.75.75 0 0 0-1.06 0L10.75 2 13 4.25z" stroke="#000" stroke-width=".25"/><path d="M6.94 9.25H6.5V8.5H5.75V8.06L6.66 7.16 7.84 8.34z" fill="#fff"/><path d="M7.5 6.5L10.25 3.75" stroke="#fff" stroke-width=".35"/></svg><span class="us">_</span></td></tr>
<tr style="--d:-0.11px"><td>30</td><td><svg class="ed" width="13" height="13" viewBox="0 0 14 14"><path d="M9.5 1.6Q9.1 1.5 8.75 1.5H2.25Q.5 1.5 .5 3.25V9.75Q.5 11.5 2.25 11.5H8.75Q10.5 11.5 10.5 9.75V8.5" fill="none" stroke="#000" stroke-width="1.18" stroke-linecap="round"/><path d="M10.25 2.5L5 7.75V10H7.25L12.5 4.75zM13.72 3.53a.75.75 0 0 0 0-1.06L12.53 1.28a.75.75 0 0 0-1.06 0L10.75 2 13 4.25z" stroke="#000" stroke-width=".25"/><path d="M6.94 9.25H6.5V8.5H5.75V8.06L6.66 7.16 7.84 8.34z" fill="#fff"/><path d="M7.5 6.5L10.25 3.75" stroke="#fff" stroke-width=".35"/></svg>Persona Juridica</td><td><svg class="ed" width="13" height="13" viewBox="0 0 14 14"><path d="M9.5 1.6Q9.1 1.5 8.75 1.5H2.25Q.5 1.5 .5 3.25V9.75Q.5 11.5 2.25 11.5H8.75Q10.5 11.5 10.5 9.75V8.5" fill="none" stroke="#000" stroke-width="1.18" stroke-linecap="round"/><path d="M10.25 2.5L5 7.75V10H7.25L12.5 4.75zM13.72 3.53a.75.75 0 0 0 0-1.06L12.53 1.28a.75.75 0 0 0-1.06 0L10.75 2 13 4.25z" stroke="#000" stroke-width=".25"/><path d="M6.94 9.25H6.5V8.5H5.75V8.06L6.66 7.16 7.84 8.34z" fill="#fff"/><path d="M7.5 6.5L10.25 3.75" stroke="#fff" stroke-width=".35"/></svg>Edisa OpenSource</td><td><svg class="zm" width="13.2" height="13" viewBox="0 0 13.2 13"><circle cx="4.95" cy="5.5" r="4.1" fill="#fff" stroke="#2a2a2a" stroke-width="1"/><path d="M4.95 3.1V7.9M2.55 5.5H7.35" stroke="#000" stroke-width="1.1" fill="none"/><path d="M8.3 8.7L11.6 12.2" stroke="#333" stroke-width="2.1" stroke-linecap="round"/></svg>A11111119</td><td>José Taibo</td><td><svg class="ed" width="13" height="13" viewBox="0 0 14 14"><path d="M9.5 1.6Q9.1 1.5 8.75 1.5H2.25Q.5 1.5 .5 3.25V9.75Q.5 11.5 2.25 11.5H8.75Q10.5 11.5 10.5 9.75V8.5" fill="none" stroke="#000" stroke-width="1.18" stroke-linecap="round"/><path d="M10.25 2.5L5 7.75V10H7.25L12.5 4.75zM13.72 3.53a.75.75 0 0 0 0-1.06L12.53 1.28a.75.75 0 0 0-1.06 0L10.75 2 13 4.25z" stroke="#000" stroke-width=".25"/><path d="M6.94 9.25H6.5V8.5H5.75V8.06L6.66 7.16 7.84 8.34z" fill="#fff"/><path d="M7.5 6.5L10.25 3.75" stroke="#fff" stroke-width=".35"/></svg><span class="us">_</span></td><td><svg class="ed" width="13" height="13" viewBox="0 0 14 14"><path d="M9.5 1.6Q9.1 1.5 8.75 1.5H2.25Q.5 1.5 .5 3.25V9.75Q.5 11.5 2.25 11.5H8.75Q10.5 11.5 10.5 9.75V8.5" fill="none" stroke="#000" stroke-width="1.18" stroke-linecap="round"/><path d="M10.25 2.5L5 7.75V10H7.25L12.5 4.75zM13.72 3.53a.75.75 0 0 0 0-1.06L12.53 1.28a.75.75 0 0 0-1.06 0L10.75 2 13 4.25z" stroke="#000" stroke-width=".25"/><path d="M6.94 9.25H6.5V8.5H5.75V8.06L6.66 7.16 7.84 8.34z" fill="#fff"/><path d="M7.5 6.5L10.25 3.75" stroke="#fff" stroke-width=".35"/></svg><svg class="zm" width="13.2" height="13" viewBox="0 0 13.2 13"><circle cx="4.95" cy="5.5" r="4.1" fill="#fff" stroke="#2a2a2a" stroke-width="1"/><path d="M4.95 3.1V7.9M2.55 5.5H7.35" stroke="#000" stroke-width="1.1" fill="none"/><path d="M8.3 8.7L11.6 12.2" stroke="#333" stroke-width="2.1" stroke-linecap="round"/></svg>jose.taibo@edisa.com</td><td><div class="ind">Becario</div><div class="ind">Candidato</div><div class="ind">Colegiado</div><div style="--d:0.2px"><svg class="ed" width="13" height="13" viewBox="0 0 14 14"><path d="M9.5 1.6Q9.1 1.5 8.75 1.5H2.25Q.5 1.5 .5 3.25V9.75Q.5 11.5 2.25 11.5H8.75Q10.5 11.5 10.5 9.75V8.5" fill="none" stroke="#000" stroke-width="1.18" stroke-linecap="round"/><path d="M10.25 2.5L5 7.75V10H7.25L12.5 4.75zM13.72 3.53a.75.75 0 0 0 0-1.06L12.53 1.28a.75.75 0 0 0-1.06 0L10.75 2 13 4.25z" stroke="#000" stroke-width=".25"/><path d="M6.94 9.25H6.5V8.5H5.75V8.06L6.66 7.16 7.84 8.34z" fill="#fff"/><path d="M7.5 6.5L10.25 3.75" stroke="#fff" stroke-width=".35"/></svg>Donante</div></td></tr>
<tr style="--d:0.64px"><td>1</td><td><svg class="ed" width="13" height="13" viewBox="0 0 14 14"><path d="M9.5 1.6Q9.1 1.5 8.75 1.5H2.25Q.5 1.5 .5 3.25V9.75Q.5 11.5 2.25 11.5H8.75Q10.5 11.5 10.5 9.75V8.5" fill="none" stroke="#000" stroke-width="1.18" stroke-linecap="round"/><path d="M10.25 2.5L5 7.75V10H7.25L12.5 4.75zM13.72 3.53a.75.75 0 0 0 0-1.06L12.53 1.28a.75.75 0 0 0-1.06 0L10.75 2 13 4.25z" stroke="#000" stroke-width=".25"/><path d="M6.94 9.25H6.5V8.5H5.75V8.06L6.66 7.16 7.84 8.34z" fill="#fff"/><path d="M7.5 6.5L10.25 3.75" stroke="#fff" stroke-width=".35"/></svg>Persona Juridica</td><td><svg class="ed" width="13" height="13" viewBox="0 0 14 14"><path d="M9.5 1.6Q9.1 1.5 8.75 1.5H2.25Q.5 1.5 .5 3.25V9.75Q.5 11.5 2.25 11.5H8.75Q10.5 11.5 10.5 9.75V8.5" fill="none" stroke="#000" stroke-width="1.18" stroke-linecap="round"/><path d="M10.25 2.5L5 7.75V10H7.25L12.5 4.75zM13.72 3.53a.75.75 0 0 0 0-1.06L12.53 1.28a.75.75 0 0 0-1.06 0L10.75 2 13 4.25z" stroke="#000" stroke-width=".25"/><path d="M6.94 9.25H6.5V8.5H5.75V8.06L6.66 7.16 7.84 8.34z" fill="#fff"/><path d="M7.5 6.5L10.25 3.75" stroke="#fff" stroke-width=".35"/></svg>Edisa S.A.</td><td><svg class="zm" width="13.2" height="13" viewBox="0 0 13.2 13"><circle cx="4.95" cy="5.5" r="4.1" fill="#fff" stroke="#2a2a2a" stroke-width="1"/><path d="M4.95 3.1V7.9M2.55 5.5H7.35" stroke="#000" stroke-width="1.1" fill="none"/><path d="M8.3 8.7L11.6 12.2" stroke="#333" stroke-width="2.1" stroke-linecap="round"/></svg>A36781334</td><td>Carlos Suarez</td><td><svg class="ed" width="13" height="13" viewBox="0 0 14 14"><path d="M9.5 1.6Q9.1 1.5 8.75 1.5H2.25Q.5 1.5 .5 3.25V9.75Q.5 11.5 2.25 11.5H8.75Q10.5 11.5 10.5 9.75V8.5" fill="none" stroke="#000" stroke-width="1.18" stroke-linecap="round"/><path d="M10.25 2.5L5 7.75V10H7.25L12.5 4.75zM13.72 3.53a.75.75 0 0 0 0-1.06L12.53 1.28a.75.75 0 0 0-1.06 0L10.75 2 13 4.25z" stroke="#000" stroke-width=".25"/><path d="M6.94 9.25H6.5V8.5H5.75V8.06L6.66 7.16 7.84 8.34z" fill="#fff"/><path d="M7.5 6.5L10.25 3.75" stroke="#fff" stroke-width=".35"/></svg><svg class="zm" width="13.2" height="13" viewBox="0 0 13.2 13"><circle cx="4.95" cy="5.5" r="4.1" fill="#fff" stroke="#2a2a2a" stroke-width="1"/><path d="M4.95 3.1V7.9M2.55 5.5H7.35" stroke="#000" stroke-width="1.1" fill="none"/><path d="M8.3 8.7L11.6 12.2" stroke="#333" stroke-width="2.1" stroke-linecap="round"/></svg>986 252535</td><td><svg class="ed" width="13" height="13" viewBox="0 0 14 14"><path d="M9.5 1.6Q9.1 1.5 8.75 1.5H2.25Q.5 1.5 .5 3.25V9.75Q.5 11.5 2.25 11.5H8.75Q10.5 11.5 10.5 9.75V8.5" fill="none" stroke="#000" stroke-width="1.18" stroke-linecap="round"/><path d="M10.25 2.5L5 7.75V10H7.25L12.5 4.75zM13.72 3.53a.75.75 0 0 0 0-1.06L12.53 1.28a.75.75 0 0 0-1.06 0L10.75 2 13 4.25z" stroke="#000" stroke-width=".25"/><path d="M6.94 9.25H6.5V8.5H5.75V8.06L6.66 7.16 7.84 8.34z" fill="#fff"/><path d="M7.5 6.5L10.25 3.75" stroke="#fff" stroke-width=".35"/></svg><svg class="zm" width="13.2" height="13" viewBox="0 0 13.2 13"><circle cx="4.95" cy="5.5" r="4.1" fill="#fff" stroke="#2a2a2a" stroke-width="1"/><path d="M4.95 3.1V7.9M2.55 5.5H7.35" stroke="#000" stroke-width="1.1" fill="none"/><path d="M8.3 8.7L11.6 12.2" stroke="#333" stroke-width="2.1" stroke-linecap="round"/></svg>info@edisa.com</td><td><svg class="ed" width="13" height="13" viewBox="0 0 14 14"><path d="M9.5 1.6Q9.1 1.5 8.75 1.5H2.25Q.5 1.5 .5 3.25V9.75Q.5 11.5 2.25 11.5H8.75Q10.5 11.5 10.5 9.75V8.5" fill="none" stroke="#000" stroke-width="1.18" stroke-linecap="round"/><path d="M10.25 2.5L5 7.75V10H7.25L12.5 4.75zM13.72 3.53a.75.75 0 0 0 0-1.06L12.53 1.28a.75.75 0 0 0-1.06 0L10.75 2 13 4.25z" stroke="#000" stroke-width=".25"/><path d="M6.94 9.25H6.5V8.5H5.75V8.06L6.66 7.16 7.84 8.34z" fill="#fff"/><path d="M7.5 6.5L10.25 3.75" stroke="#fff" stroke-width=".35"/></svg><span class="us">_</span></td></tr>
<tr style="--d:0.08px"><td>38</td><td><svg class="ed" width="13" height="13" viewBox="0 0 14 14"><path d="M9.5 1.6Q9.1 1.5 8.75 1.5H2.25Q.5 1.5 .5 3.25V9.75Q.5 11.5 2.25 11.5H8.75Q10.5 11.5 10.5 9.75V8.5" fill="none" stroke="#000" stroke-width="1.18" stroke-linecap="round"/><path d="M10.25 2.5L5 7.75V10H7.25L12.5 4.75zM13.72 3.53a.75.75 0 0 0 0-1.06L12.53 1.28a.75.75 0 0 0-1.06 0L10.75 2 13 4.25z" stroke="#000" stroke-width=".25"/><path d="M6.94 9.25H6.5V8.5H5.75V8.06L6.66 7.16 7.84 8.34z" fill="#fff"/><path d="M7.5 6.5L10.25 3.75" stroke="#fff" stroke-width=".35"/></svg>Persona Juridica</td><td><svg class="ed" width="13" height="13" viewBox="0 0 14 14"><path d="M9.5 1.6Q9.1 1.5 8.75 1.5H2.25Q.5 1.5 .5 3.25V9.75Q.5 11.5 2.25 11.5H8.75Q10.5 11.5 10.5 9.75V8.5" fill="none" stroke="#000" stroke-width="1.18" stroke-linecap="round"/><path d="M10.25 2.5L5 7.75V10H7.25L12.5 4.75zM13.72 3.53a.75.75 0 0 0 0-1.06L12.53 1.28a.75.75 0 0 0-1.06 0L10.75 2 13 4.25z" stroke="#000" stroke-width=".25"/><path d="M6.94 9.25H6.5V8.5H5.75V8.06L6.66 7.16 7.84 8.34z" fill="#fff"/><path d="M7.5 6.5L10.25 3.75" stroke="#fff" stroke-width=".35"/></svg>Entidad Propia</td><td><svg class="zm" width="13.2" height="13" viewBox="0 0 13.2 13"><circle cx="4.95" cy="5.5" r="4.1" fill="#fff" stroke="#2a2a2a" stroke-width="1"/><path d="M4.95 3.1V7.9M2.55 5.5H7.35" stroke="#000" stroke-width="1.1" fill="none"/><path d="M8.3 8.7L11.6 12.2" stroke="#333" stroke-width="2.1" stroke-linecap="round"/></svg>B00000000</td><td><span class="us">_</span></td><td><svg class="ed" width="13" height="13" viewBox="0 0 14 14"><path d="M9.5 1.6Q9.1 1.5 8.75 1.5H2.25Q.5 1.5 .5 3.25V9.75Q.5 11.5 2.25 11.5H8.75Q10.5 11.5 10.5 9.75V8.5" fill="none" stroke="#000" stroke-width="1.18" stroke-linecap="round"/><path d="M10.25 2.5L5 7.75V10H7.25L12.5 4.75zM13.72 3.53a.75.75 0 0 0 0-1.06L12.53 1.28a.75.75 0 0 0-1.06 0L10.75 2 13 4.25z" stroke="#000" stroke-width=".25"/><path d="M6.94 9.25H6.5V8.5H5.75V8.06L6.66 7.16 7.84 8.34z" fill="#fff"/><path d="M7.5 6.5L10.25 3.75" stroke="#fff" stroke-width=".35"/></svg><span class="us">_</span></td><td><svg class="ed" width="13" height="13" viewBox="0 0 14 14"><path d="M9.5 1.6Q9.1 1.5 8.75 1.5H2.25Q.5 1.5 .5 3.25V9.75Q.5 11.5 2.25 11.5H8.75Q10.5 11.5 10.5 9.75V8.5" fill="none" stroke="#000" stroke-width="1.18" stroke-linecap="round"/><path d="M10.25 2.5L5 7.75V10H7.25L12.5 4.75zM13.72 3.53a.75.75 0 0 0 0-1.06L12.53 1.28a.75.75 0 0 0-1.06 0L10.75 2 13 4.25z" stroke="#000" stroke-width=".25"/><path d="M6.94 9.25H6.5V8.5H5.75V8.06L6.66 7.16 7.84 8.34z" fill="#fff"/><path d="M7.5 6.5L10.25 3.75" stroke="#fff" stroke-width=".35"/></svg><span class="us">_</span></td><td><svg class="ed" width="13" height="13" viewBox="0 0 14 14"><path d="M9.5 1.6Q9.1 1.5 8.75 1.5H2.25Q.5 1.5 .5 3.25V9.75Q.5 11.5 2.25 11.5H8.75Q10.5 11.5 10.5 9.75V8.5" fill="none" stroke="#000" stroke-width="1.18" stroke-linecap="round"/><path d="M10.25 2.5L5 7.75V10H7.25L12.5 4.75zM13.72 3.53a.75.75 0 0 0 0-1.06L12.53 1.28a.75.75 0 0 0-1.06 0L10.75 2 13 4.25z" stroke="#000" stroke-width=".25"/><path d="M6.94 9.25H6.5V8.5H5.75V8.06L6.66 7.16 7.84 8.34z" fill="#fff"/><path d="M7.5 6.5L10.25 3.75" stroke="#fff" stroke-width=".35"/></svg><span class="us">_</span></td></tr>
<tr style="--d:0.52px"><td>5</td><td><svg class="ed" width="13" height="13" viewBox="0 0 14 14"><path d="M9.5 1.6Q9.1 1.5 8.75 1.5H2.25Q.5 1.5 .5 3.25V9.75Q.5 11.5 2.25 11.5H8.75Q10.5 11.5 10.5 9.75V8.5" fill="none" stroke="#000" stroke-width="1.18" stroke-linecap="round"/><path d="M10.25 2.5L5 7.75V10H7.25L12.5 4.75zM13.72 3.53a.75.75 0 0 0 0-1.06L12.53 1.28a.75.75 0 0 0-1.06 0L10.75 2 13 4.25z" stroke="#000" stroke-width=".25"/><path d="M6.94 9.25H6.5V8.5H5.75V8.06L6.66 7.16 7.84 8.34z" fill="#fff"/><path d="M7.5 6.5L10.25 3.75" stroke="#fff" stroke-width=".35"/></svg>Persona Fisica</td><td><svg class="ed" width="13" height="13" viewBox="0 0 14 14"><path d="M9.5 1.6Q9.1 1.5 8.75 1.5H2.25Q.5 1.5 .5 3.25V9.75Q.5 11.5 2.25 11.5H8.75Q10.5 11.5 10.5 9.75V8.5" fill="none" stroke="#000" stroke-width="1.18" stroke-linecap="round"/><path d="M10.25 2.5L5 7.75V10H7.25L12.5 4.75zM13.72 3.53a.75.75 0 0 0 0-1.06L12.53 1.28a.75.75 0 0 0-1.06 0L10.75 2 13 4.25z" stroke="#000" stroke-width=".25"/><path d="M6.94 9.25H6.5V8.5H5.75V8.06L6.66 7.16 7.84 8.34z" fill="#fff"/><path d="M7.5 6.5L10.25 3.75" stroke="#fff" stroke-width=".35"/></svg>Felipe Gerente</td><td><svg class="zm" width="13.2" height="13" viewBox="0 0 13.2 13"><circle cx="4.95" cy="5.5" r="4.1" fill="#fff" stroke="#2a2a2a" stroke-width="1"/><path d="M4.95 3.1V7.9M2.55 5.5H7.35" stroke="#000" stroke-width="1.1" fill="none"/><path d="M8.3 8.7L11.6 12.2" stroke="#333" stroke-width="2.1" stroke-linecap="round"/></svg>333333333</td><td><span class="us">_</span></td><td><svg class="ed" width="13" height="13" viewBox="0 0 14 14"><path d="M9.5 1.6Q9.1 1.5 8.75 1.5H2.25Q.5 1.5 .5 3.25V9.75Q.5 11.5 2.25 11.5H8.75Q10.5 11.5 10.5 9.75V8.5" fill="none" stroke="#000" stroke-width="1.18" stroke-linecap="round"/><path d="M10.25 2.5L5 7.75V10H7.25L12.5 4.75zM13.72 3.53a.75.75 0 0 0 0-1.06L12.53 1.28a.75.75 0 0 0-1.06 0L10.75 2 13 4.25z" stroke="#000" stroke-width=".25"/><path d="M6.94 9.25H6.5V8.5H5.75V8.06L6.66 7.16 7.84 8.34z" fill="#fff"/><path d="M7.5 6.5L10.25 3.75" stroke="#fff" stroke-width=".35"/></svg><span class="us">_</span></td><td><svg class="ed" width="13" height="13" viewBox="0 0 14 14"><path d="M9.5 1.6Q9.1 1.5 8.75 1.5H2.25Q.5 1.5 .5 3.25V9.75Q.5 11.5 2.25 11.5H8.75Q10.5 11.5 10.5 9.75V8.5" fill="none" stroke="#000" stroke-width="1.18" stroke-linecap="round"/><path d="M10.25 2.5L5 7.75V10H7.25L12.5 4.75zM13.72 3.53a.75.75 0 0 0 0-1.06L12.53 1.28a.75.75 0 0 0-1.06 0L10.75 2 13 4.25z" stroke="#000" stroke-width=".25"/><path d="M6.94 9.25H6.5V8.5H5.75V8.06L6.66 7.16 7.84 8.34z" fill="#fff"/><path d="M7.5 6.5L10.25 3.75" stroke="#fff" stroke-width=".35"/></svg><svg class="zm" width="13.2" height="13" viewBox="0 0 13.2 13"><circle cx="4.95" cy="5.5" r="4.1" fill="#fff" stroke="#2a2a2a" stroke-width="1"/><path d="M4.95 3.1V7.9M2.55 5.5H7.35" stroke="#000" stroke-width="1.1" fill="none"/><path d="M8.3 8.7L11.6 12.2" stroke="#333" stroke-width="2.1" stroke-linecap="round"/></svg>felipe@gmail.com</td><td><svg class="ed" width="13" height="13" viewBox="0 0 14 14"><path d="M9.5 1.6Q9.1 1.5 8.75 1.5H2.25Q.5 1.5 .5 3.25V9.75Q.5 11.5 2.25 11.5H8.75Q10.5 11.5 10.5 9.75V8.5" fill="none" stroke="#000" stroke-width="1.18" stroke-linecap="round"/><path d="M10.25 2.5L5 7.75V10H7.25L12.5 4.75zM13.72 3.53a.75.75 0 0 0 0-1.06L12.53 1.28a.75.75 0 0 0-1.06 0L10.75 2 13 4.25z" stroke="#000" stroke-width=".25"/><path d="M6.94 9.25H6.5V8.5H5.75V8.06L6.66 7.16 7.84 8.34z" fill="#fff"/><path d="M7.5 6.5L10.25 3.75" stroke="#fff" stroke-width=".35"/></svg><span class="us">_</span></td></tr>
<tr style="--d:-0.05px"><td>22</td><td><svg class="ed" width="13" height="13" viewBox="0 0 14 14"><path d="M9.5 1.6Q9.1 1.5 8.75 1.5H2.25Q.5 1.5 .5 3.25V9.75Q.5 11.5 2.25 11.5H8.75Q10.5 11.5 10.5 9.75V8.5" fill="none" stroke="#000" stroke-width="1.18" stroke-linecap="round"/><path d="M10.25 2.5L5 7.75V10H7.25L12.5 4.75zM13.72 3.53a.75.75 0 0 0 0-1.06L12.53 1.28a.75.75 0 0 0-1.06 0L10.75 2 13 4.25z" stroke="#000" stroke-width=".25"/><path d="M6.94 9.25H6.5V8.5H5.75V8.06L6.66 7.16 7.84 8.34z" fill="#fff"/><path d="M7.5 6.5L10.25 3.75" stroke="#fff" stroke-width=".35"/></svg>Persona Fisica</td><td><svg class="ed" width="13" height="13" viewBox="0 0 14 14"><path d="M9.5 1.6Q9.1 1.5 8.75 1.5H2.25Q.5 1.5 .5 3.25V9.75Q.5 11.5 2.25 11.5H8.75Q10.5 11.5 10.5 9.75V8.5" fill="none" stroke="#000" stroke-width="1.18" stroke-linecap="round"/><path d="M10.25 2.5L5 7.75V10H7.25L12.5 4.75zM13.72 3.53a.75.75 0 0 0 0-1.06L12.53 1.28a.75.75 0 0 0-1.06 0L10.75 2 13 4.25z" stroke="#000" stroke-width=".25"/><path d="M6.94 9.25H6.5V8.5H5.75V8.06L6.66 7.16 7.84 8.34z" fill="#fff"/><path d="M7.5 6.5L10.25 3.75" stroke="#fff" stroke-width=".35"/></svg>Gerente Perez, Elena</td><td><svg class="zm" width="13.2" height="13" viewBox="0 0 13.2 13"><circle cx="4.95" cy="5.5" r="4.1" fill="#fff" stroke="#2a2a2a" stroke-width="1"/><path d="M4.95 3.1V7.9M2.55 5.5H7.35" stroke="#000" stroke-width="1.1" fill="none"/><path d="M8.3 8.7L11.6 12.2" stroke="#333" stroke-width="2.1" stroke-linecap="round"/></svg>22345678M</td><td><span class="us">_</span></td><td><svg class="ed" width="13" height="13" viewBox="0 0 14 14"><path d="M9.5 1.6Q9.1 1.5 8.75 1.5H2.25Q.5 1.5 .5 3.25V9.75Q.5 11.5 2.25 11.5H8.75Q10.5 11.5 10.5 9.75V8.5" fill="none" stroke="#000" stroke-width="1.18" stroke-linecap="round"/><path d="M10.25 2.5L5 7.75V10H7.25L12.5 4.75zM13.72 3.53a.75.75 0 0 0 0-1.06L12.53 1.28a.75.75 0 0 0-1.06 0L10.75 2 13 4.25z" stroke="#000" stroke-width=".25"/><path d="M6.94 9.25H6.5V8.5H5.75V8.06L6.66 7.16 7.84 8.34z" fill="#fff"/><path d="M7.5 6.5L10.25 3.75" stroke="#fff" stroke-width=".35"/></svg><span class="us">_</span></td><td><svg class="ed" width="13" height="13" viewBox="0 0 14 14"><path d="M9.5 1.6Q9.1 1.5 8.75 1.5H2.25Q.5 1.5 .5 3.25V9.75Q.5 11.5 2.25 11.5H8.75Q10.5 11.5 10.5 9.75V8.5" fill="none" stroke="#000" stroke-width="1.18" stroke-linecap="round"/><path d="M10.25 2.5L5 7.75V10H7.25L12.5 4.75zM13.72 3.53a.75.75 0 0 0 0-1.06L12.53 1.28a.75.75 0 0 0-1.06 0L10.75 2 13 4.25z" stroke="#000" stroke-width=".25"/><path d="M6.94 9.25H6.5V8.5H5.75V8.06L6.66 7.16 7.84 8.34z" fill="#fff"/><path d="M7.5 6.5L10.25 3.75" stroke="#fff" stroke-width=".35"/></svg><svg class="zm" width="13.2" height="13" viewBox="0 0 13.2 13"><circle cx="4.95" cy="5.5" r="4.1" fill="#fff" stroke="#2a2a2a" stroke-width="1"/><path d="M4.95 3.1V7.9M2.55 5.5H7.35" stroke="#000" stroke-width="1.1" fill="none"/><path d="M8.3 8.7L11.6 12.2" stroke="#333" stroke-width="2.1" stroke-linecap="round"/></svg>elena@gmail.com</td><td><div class="ind">Colegiado</div><div style="--d:0.39px"><svg class="ed" width="13" height="13" viewBox="0 0 14 14"><path d="M9.5 1.6Q9.1 1.5 8.75 1.5H2.25Q.5 1.5 .5 3.25V9.75Q.5 11.5 2.25 11.5H8.75Q10.5 11.5 10.5 9.75V8.5" fill="none" stroke="#000" stroke-width="1.18" stroke-linecap="round"/><path d="M10.25 2.5L5 7.75V10H7.25L12.5 4.75zM13.72 3.53a.75.75 0 0 0 0-1.06L12.53 1.28a.75.75 0 0 0-1.06 0L10.75 2 13 4.25z" stroke="#000" stroke-width=".25"/><path d="M6.94 9.25H6.5V8.5H5.75V8.06L6.66 7.16 7.84 8.34z" fill="#fff"/><path d="M7.5 6.5L10.25 3.75" stroke="#fff" stroke-width=".35"/></svg>Usuario/Beneficiario</div></td></tr>
<tr style="--d:-0.17px"><td>2</td><td><svg class="ed" width="13" height="13" viewBox="0 0 14 14"><path d="M9.5 1.6Q9.1 1.5 8.75 1.5H2.25Q.5 1.5 .5 3.25V9.75Q.5 11.5 2.25 11.5H8.75Q10.5 11.5 10.5 9.75V8.5" fill="none" stroke="#000" stroke-width="1.18" stroke-linecap="round"/><path d="M10.25 2.5L5 7.75V10H7.25L12.5 4.75zM13.72 3.53a.75.75 0 0 0 0-1.06L12.53 1.28a.75.75 0 0 0-1.06 0L10.75 2 13 4.25z" stroke="#000" stroke-width=".25"/><path d="M6.94 9.25H6.5V8.5H5.75V8.06L6.66 7.16 7.84 8.34z" fill="#fff"/><path d="M7.5 6.5L10.25 3.75" stroke="#fff" stroke-width=".35"/></svg>Persona Fisica</td><td><svg class="ed" width="13" height="13" viewBox="0 0 14 14"><path d="M9.5 1.6Q9.1 1.5 8.75 1.5H2.25Q.5 1.5 .5 3.25V9.75Q.5 11.5 2.25 11.5H8.75Q10.5 11.5 10.5 9.75V8.5" fill="none" stroke="#000" stroke-width="1.18" stroke-linecap="round"/><path d="M10.25 2.5L5 7.75V10H7.25L12.5 4.75zM13.72 3.53a.75.75 0 0 0 0-1.06L12.53 1.28a.75.75 0 0 0-1.06 0L10.75 2 13 4.25z" stroke="#000" stroke-width=".25"/><path d="M6.94 9.25H6.5V8.5H5.75V8.06L6.66 7.16 7.84 8.34z" fill="#fff"/><path d="M7.5 6.5L10.25 3.75" stroke="#fff" stroke-width=".35"/></svg>González Perez, Julia</td><td><svg class="zm" width="13.2" height="13" viewBox="0 0 13.2 13"><circle cx="4.95" cy="5.5" r="4.1" fill="#fff" stroke="#2a2a2a" stroke-width="1"/><path d="M4.95 3.1V7.9M2.55 5.5H7.35" stroke="#000" stroke-width="1.1" fill="none"/><path d="M8.3 8.7L11.6 12.2" stroke="#333" stroke-width="2.1" stroke-linecap="round"/></svg>53611721D</td><td><span class="us">_</span></td><td><svg class="ed" width="13" height="13" viewBox="0 0 14 14"><path d="M9.5 1.6Q9.1 1.5 8.75 1.5H2.25Q.5 1.5 .5 3.25V9.75Q.5 11.5 2.25 11.5H8.75Q10.5 11.5 10.5 9.75V8.5" fill="none" stroke="#000" stroke-width="1.18" stroke-linecap="round"/><path d="M10.25 2.5L5 7.75V10H7.25L12.5 4.75zM13.72 3.53a.75.75 0 0 0 0-1.06L12.53 1.28a.75.75 0 0 0-1.06 0L10.75 2 13 4.25z" stroke="#000" stroke-width=".25"/><path d="M6.94 9.25H6.5V8.5H5.75V8.06L6.66 7.16 7.84 8.34z" fill="#fff"/><path d="M7.5 6.5L10.25 3.75" stroke="#fff" stroke-width=".35"/></svg><svg class="zm" width="13.2" height="13" viewBox="0 0 13.2 13"><circle cx="4.95" cy="5.5" r="4.1" fill="#fff" stroke="#2a2a2a" stroke-width="1"/><path d="M4.95 3.1V7.9M2.55 5.5H7.35" stroke="#000" stroke-width="1.1" fill="none"/><path d="M8.3 8.7L11.6 12.2" stroke="#333" stroke-width="2.1" stroke-linecap="round"/></svg>986 321 542</td><td><svg class="ed" width="13" height="13" viewBox="0 0 14 14"><path d="M9.5 1.6Q9.1 1.5 8.75 1.5H2.25Q.5 1.5 .5 3.25V9.75Q.5 11.5 2.25 11.5H8.75Q10.5 11.5 10.5 9.75V8.5" fill="none" stroke="#000" stroke-width="1.18" stroke-linecap="round"/><path d="M10.25 2.5L5 7.75V10H7.25L12.5 4.75zM13.72 3.53a.75.75 0 0 0 0-1.06L12.53 1.28a.75.75 0 0 0-1.06 0L10.75 2 13 4.25z" stroke="#000" stroke-width=".25"/><path d="M6.94 9.25H6.5V8.5H5.75V8.06L6.66 7.16 7.84 8.34z" fill="#fff"/><path d="M7.5 6.5L10.25 3.75" stroke="#fff" stroke-width=".35"/></svg><svg class="zm" width="13.2" height="13" viewBox="0 0 13.2 13"><circle cx="4.95" cy="5.5" r="4.1" fill="#fff" stroke="#2a2a2a" stroke-width="1"/><path d="M4.95 3.1V7.9M2.55 5.5H7.35" stroke="#000" stroke-width="1.1" fill="none"/><path d="M8.3 8.7L11.6 12.2" stroke="#333" stroke-width="2.1" stroke-linecap="round"/></svg>julia.gonzalez.perez@gmail.com</td><td><div style="--d:-0.17px"><svg class="ed" width="13" height="13" viewBox="0 0 14 14"><path d="M9.5 1.6Q9.1 1.5 8.75 1.5H2.25Q.5 1.5 .5 3.25V9.75Q.5 11.5 2.25 11.5H8.75Q10.5 11.5 10.5 9.75V8.5" fill="none" stroke="#000" stroke-width="1.18" stroke-linecap="round"/><path d="M10.25 2.5L5 7.75V10H7.25L12.5 4.75zM13.72 3.53a.75.75 0 0 0 0-1.06L12.53 1.28a.75.75 0 0 0-1.06 0L10.75 2 13 4.25z" stroke="#000" stroke-width=".25"/><path d="M6.94 9.25H6.5V8.5H5.75V8.06L6.66 7.16 7.84 8.34z" fill="#fff"/><path d="M7.5 6.5L10.25 3.75" stroke="#fff" stroke-width=".35"/></svg>Usuario/Beneficiario</div></td></tr>
<tr style="--d:0.27px"><td>39</td><td><svg class="ed" width="13" height="13" viewBox="0 0 14 14"><path d="M9.5 1.6Q9.1 1.5 8.75 1.5H2.25Q.5 1.5 .5 3.25V9.75Q.5 11.5 2.25 11.5H8.75Q10.5 11.5 10.5 9.75V8.5" fill="none" stroke="#000" stroke-width="1.18" stroke-linecap="round"/><path d="M10.25 2.5L5 7.75V10H7.25L12.5 4.75zM13.72 3.53a.75.75 0 0 0 0-1.06L12.53 1.28a.75.75 0 0 0-1.06 0L10.75 2 13 4.25z" stroke="#000" stroke-width=".25"/><path d="M6.94 9.25H6.5V8.5H5.75V8.06L6.66 7.16 7.84 8.34z" fill="#fff"/><path d="M7.5 6.5L10.25 3.75" stroke="#fff" stroke-width=".35"/></svg>Persona Juridica</td><td><svg class="ed" width="13" height="13" viewBox="0 0 14 14"><path d="M9.5 1.6Q9.1 1.5 8.75 1.5H2.25Q.5 1.5 .5 3.25V9.75Q.5 11.5 2.25 11.5H8.75Q10.5 11.5 10.5 9.75V8.5" fill="none" stroke="#000" stroke-width="1.18" stroke-linecap="round"/><path d="M10.25 2.5L5 7.75V10H7.25L12.5 4.75zM13.72 3.53a.75.75 0 0 0 0-1.06L12.53 1.28a.75.75 0 0 0-1.06 0L10.75 2 13 4.25z" stroke="#000" stroke-width=".25"/><path d="M6.94 9.25H6.5V8.5H5.75V8.06L6.66 7.16 7.84 8.34z" fill="#fff"/><path d="M7.5 6.5L10.25 3.75" stroke="#fff" stroke-width=".35"/></svg>Luis Alvárez Sada</td><td><svg class="zm" width="13.2" height="13" viewBox="0 0 13.2 13"><circle cx="4.95" cy="5.5" r="4.1" fill="#fff" stroke="#2a2a2a" stroke-width="1"/><path d="M4.95 3.1V7.9M2.55 5.5H7.35" stroke="#000" stroke-width="1.1" fill="none"/><path d="M8.3 8.7L11.6 12.2" stroke="#333" stroke-width="2.1" stroke-linecap="round"/></svg>B00000000</td><td><span class="us">_</span></td><td><svg class="ed" width="13" height="13" viewBox="0 0 14 14"><path d="M9.5 1.6Q9.1 1.5 8.75 1.5H2.25Q.5 1.5 .5 3.25V9.75Q.5 11.5 2.25 11.5H8.75Q10.5 11.5 10.5 9.75V8.5" fill="none" stroke="#000" stroke-width="1.18" stroke-linecap="round"/><path d="M10.25 2.5L5 7.75V10H7.25L12.5 4.75zM13.72 3.53a.75.75 0 0 0 0-1.06L12.53 1.28a.75.75 0 0 0-1.06 0L10.75 2 13 4.25z" stroke="#000" stroke-width=".25"/><path d="M6.94 9.25H6.5V8.5H5.75V8.06L6.66 7.16 7.84 8.34z" fill="#fff"/><path d="M7.5 6.5L10.25 3.75" stroke="#fff" stroke-width=".35"/></svg><span class="us">_</span></td><td><svg class="ed" width="13" height="13" viewBox="0 0 14 14"><path d="M9.5 1.6Q9.1 1.5 8.75 1.5H2.25Q.5 1.5 .5 3.25V9.75Q.5 11.5 2.25 11.5H8.75Q10.5 11.5 10.5 9.75V8.5" fill="none" stroke="#000" stroke-width="1.18" stroke-linecap="round"/><path d="M10.25 2.5L5 7.75V10H7.25L12.5 4.75zM13.72 3.53a.75.75 0 0 0 0-1.06L12.53 1.28a.75.75 0 0 0-1.06 0L10.75 2 13 4.25z" stroke="#000" stroke-width=".25"/><path d="M6.94 9.25H6.5V8.5H5.75V8.06L6.66 7.16 7.84 8.34z" fill="#fff"/><path d="M7.5 6.5L10.25 3.75" stroke="#fff" stroke-width=".35"/></svg><span class="us">_</span></td><td><div style="--d:0.27px"><svg class="ed" width="13" height="13" viewBox="0 0 14 14"><path d="M9.5 1.6Q9.1 1.5 8.75 1.5H2.25Q.5 1.5 .5 3.25V9.75Q.5 11.5 2.25 11.5H8.75Q10.5 11.5 10.5 9.75V8.5" fill="none" stroke="#000" stroke-width="1.18" stroke-linecap="round"/><path d="M10.25 2.5L5 7.75V10H7.25L12.5 4.75zM13.72 3.53a.75.75 0 0 0 0-1.06L12.53 1.28a.75.75 0 0 0-1.06 0L10.75 2 13 4.25z" stroke="#000" stroke-width=".25"/><path d="M6.94 9.25H6.5V8.5H5.75V8.06L6.66 7.16 7.84 8.34z" fill="#fff"/><path d="M7.5 6.5L10.25 3.75" stroke="#fff" stroke-width=".35"/></svg>Usuario/Beneficiario</div></td></tr>
<tr style="--d:-0.3px"><td>23</td><td><svg class="ed" width="13" height="13" viewBox="0 0 14 14"><path d="M9.5 1.6Q9.1 1.5 8.75 1.5H2.25Q.5 1.5 .5 3.25V9.75Q.5 11.5 2.25 11.5H8.75Q10.5 11.5 10.5 9.75V8.5" fill="none" stroke="#000" stroke-width="1.18" stroke-linecap="round"/><path d="M10.25 2.5L5 7.75V10H7.25L12.5 4.75zM13.72 3.53a.75.75 0 0 0 0-1.06L12.53 1.28a.75.75 0 0 0-1.06 0L10.75 2 13 4.25z" stroke="#000" stroke-width=".25"/><path d="M6.94 9.25H6.5V8.5H5.75V8.06L6.66 7.16 7.84 8.34z" fill="#fff"/><path d="M7.5 6.5L10.25 3.75" stroke="#fff" stroke-width=".35"/></svg>Persona Fisica</td><td><svg class="ed" width="13" height="13" viewBox="0 0 14 14"><path d="M9.5 1.6Q9.1 1.5 8.75 1.5H2.25Q.5 1.5 .5 3.25V9.75Q.5 11.5 2.25 11.5H8.75Q10.5 11.5 10.5 9.75V8.5" fill="none" stroke="#000" stroke-width="1.18" stroke-linecap="round"/><path d="M10.25 2.5L5 7.75V10H7.25L12.5 4.75zM13.72 3.53a.75.75 0 0 0 0-1.06L12.53 1.28a.75.75 0 0 0-1.06 0L10.75 2 13 4.25z" stroke="#000" stroke-width=".25"/><path d="M6.94 9.25H6.5V8.5H5.75V8.06L6.66 7.16 7.84 8.34z" fill="#fff"/><path d="M7.5 6.5L10.25 3.75" stroke="#fff" stroke-width=".35"/></svg>Martinez García, Alicia</td><td><svg class="zm" width="13.2" height="13" viewBox="0 0 13.2 13"><circle cx="4.95" cy="5.5" r="4.1" fill="#fff" stroke="#2a2a2a" stroke-width="1"/><path d="M4.95 3.1V7.9M2.55 5.5H7.35" stroke="#000" stroke-width="1.1" fill="none"/><path d="M8.3 8.7L11.6 12.2" stroke="#333" stroke-width="2.1" stroke-linecap="round"/></svg>12345677J</td><td><span class="us">_</span></td><td><svg class="ed" width="13" height="13" viewBox="0 0 14 14"><path d="M9.5 1.6Q9.1 1.5 8.75 1.5H2.25Q.5 1.5 .5 3.25V9.75Q.5 11.5 2.25 11.5H8.75Q10.5 11.5 10.5 9.75V8.5" fill="none" stroke="#000" stroke-width="1.18" stroke-linecap="round"/><path d="M10.25 2.5L5 7.75V10H7.25L12.5 4.75zM13.72 3.53a.75.75 0 0 0 0-1.06L12.53 1.28a.75.75 0 0 0-1.06 0L10.75 2 13 4.25z" stroke="#000" stroke-width=".25"/><path d="M6.94 9.25H6.5V8.5H5.75V8.06L6.66 7.16 7.84 8.34z" fill="#fff"/><path d="M7.5 6.5L10.25 3.75" stroke="#fff" stroke-width=".35"/></svg><span class="us">_</span></td><td><svg class="ed" width="13" height="13" viewBox="0 0 14 14"><path d="M9.5 1.6Q9.1 1.5 8.75 1.5H2.25Q.5 1.5 .5 3.25V9.75Q.5 11.5 2.25 11.5H8.75Q10.5 11.5 10.5 9.75V8.5" fill="none" stroke="#000" stroke-width="1.18" stroke-linecap="round"/><path d="M10.25 2.5L5 7.75V10H7.25L12.5 4.75zM13.72 3.53a.75.75 0 0 0 0-1.06L12.53 1.28a.75.75 0 0 0-1.06 0L10.75 2 13 4.25z" stroke="#000" stroke-width=".25"/><path d="M6.94 9.25H6.5V8.5H5.75V8.06L6.66 7.16 7.84 8.34z" fill="#fff"/><path d="M7.5 6.5L10.25 3.75" stroke="#fff" stroke-width=".35"/></svg><svg class="zm" width="13.2" height="13" viewBox="0 0 13.2 13"><circle cx="4.95" cy="5.5" r="4.1" fill="#fff" stroke="#2a2a2a" stroke-width="1"/><path d="M4.95 3.1V7.9M2.55 5.5H7.35" stroke="#000" stroke-width="1.1" fill="none"/><path d="M8.3 8.7L11.6 12.2" stroke="#333" stroke-width="2.1" stroke-linecap="round"/></svg>alicia@gmail.com</td><td><div style="--d:-0.3px"><svg class="ed" width="13" height="13" viewBox="0 0 14 14"><path d="M9.5 1.6Q9.1 1.5 8.75 1.5H2.25Q.5 1.5 .5 3.25V9.75Q.5 11.5 2.25 11.5H8.75Q10.5 11.5 10.5 9.75V8.5" fill="none" stroke="#000" stroke-width="1.18" stroke-linecap="round"/><path d="M10.25 2.5L5 7.75V10H7.25L12.5 4.75zM13.72 3.53a.75.75 0 0 0 0-1.06L12.53 1.28a.75.75 0 0 0-1.06 0L10.75 2 13 4.25z" stroke="#000" stroke-width=".25"/><path d="M6.94 9.25H6.5V8.5H5.75V8.06L6.66 7.16 7.84 8.34z" fill="#fff"/><path d="M7.5 6.5L10.25 3.75" stroke="#fff" stroke-width=".35"/></svg>Usuario/Beneficiario</div></td></tr>
<tr style="--d:0.14px"><td>3</td><td><svg class="ed" width="13" height="13" viewBox="0 0 14 14"><path d="M9.5 1.6Q9.1 1.5 8.75 1.5H2.25Q.5 1.5 .5 3.25V9.75Q.5 11.5 2.25 11.5H8.75Q10.5 11.5 10.5 9.75V8.5" fill="none" stroke="#000" stroke-width="1.18" stroke-linecap="round"/><path d="M10.25 2.5L5 7.75V10H7.25L12.5 4.75zM13.72 3.53a.75.75 0 0 0 0-1.06L12.53 1.28a.75.75 0 0 0-1.06 0L10.75 2 13 4.25z" stroke="#000" stroke-width=".25"/><path d="M6.94 9.25H6.5V8.5H5.75V8.06L6.66 7.16 7.84 8.34z" fill="#fff"/><path d="M7.5 6.5L10.25 3.75" stroke="#fff" stroke-width=".35"/></svg>Persona Juridica</td><td><svg class="ed" width="13" height="13" viewBox="0 0 14 14"><path d="M9.5 1.6Q9.1 1.5 8.75 1.5H2.25Q.5 1.5 .5 3.25V9.75Q.5 11.5 2.25 11.5H8.75Q10.5 11.5 10.5 9.75V8.5" fill="none" stroke="#000" stroke-width="1.18" stroke-linecap="round"/><path d="M10.25 2.5L5 7.75V10H7.25L12.5 4.75zM13.72 3.53a.75.75 0 0 0 0-1.06L12.53 1.28a.75.75 0 0 0-1.06 0L10.75 2 13 4.25z" stroke="#000" stroke-width=".25"/><path d="M6.94 9.25H6.5V8.5H5.75V8.06L6.66 7.16 7.84 8.34z" fill="#fff"/><path d="M7.5 6.5L10.25 3.75" stroke="#fff" stroke-width=".35"/></svg>Materiales de Oficina S.L.</td><td><svg class="zm" width="13.2" height="13" viewBox="0 0 13.2 13"><circle cx="4.95" cy="5.5" r="4.1" fill="#fff" stroke="#2a2a2a" stroke-width="1"/><path d="M4.95 3.1V7.9M2.55 5.5H7.35" stroke="#000" stroke-width="1.1" fill="none"/><path d="M8.3 8.7L11.6 12.2" stroke="#333" stroke-width="2.1" stroke-linecap="round"/></svg>G15597289</td><td><span class="us">_</span></td><td><svg class="ed" width="13" height="13" viewBox="0 0 14 14"><path d="M9.5 1.6Q9.1 1.5 8.75 1.5H2.25Q.5 1.5 .5 3.25V9.75Q.5 11.5 2.25 11.5H8.75Q10.5 11.5 10.5 9.75V8.5" fill="none" stroke="#000" stroke-width="1.18" stroke-linecap="round"/><path d="M10.25 2.5L5 7.75V10H7.25L12.5 4.75zM13.72 3.53a.75.75 0 0 0 0-1.06L12.53 1.28a.75.75 0 0 0-1.06 0L10.75 2 13 4.25z" stroke="#000" stroke-width=".25"/><path d="M6.94 9.25H6.5V8.5H5.75V8.06L6.66 7.16 7.84 8.34z" fill="#fff"/><path d="M7.5 6.5L10.25 3.75" stroke="#fff" stroke-width=".35"/></svg><span class="us">_</span></td><td><svg class="ed" width="13" height="13" viewBox="0 0 14 14"><path d="M9.5 1.6Q9.1 1.5 8.75 1.5H2.25Q.5 1.5 .5 3.25V9.75Q.5 11.5 2.25 11.5H8.75Q10.5 11.5 10.5 9.75V8.5" fill="none" stroke="#000" stroke-width="1.18" stroke-linecap="round"/><path d="M10.25 2.5L5 7.75V10H7.25L12.5 4.75zM13.72 3.53a.75.75 0 0 0 0-1.06L12.53 1.28a.75.75 0 0 0-1.06 0L10.75 2 13 4.25z" stroke="#000" stroke-width=".25"/><path d="M6.94 9.25H6.5V8.5H5.75V8.06L6.66 7.16 7.84 8.34z" fill="#fff"/><path d="M7.5 6.5L10.25 3.75" stroke="#fff" stroke-width=".35"/></svg><span class="us">_</span></td><td><svg class="ed" width="13" height="13" viewBox="0 0 14 14"><path d="M9.5 1.6Q9.1 1.5 8.75 1.5H2.25Q.5 1.5 .5 3.25V9.75Q.5 11.5 2.25 11.5H8.75Q10.5 11.5 10.5 9.75V8.5" fill="none" stroke="#000" stroke-width="1.18" stroke-linecap="round"/><path d="M10.25 2.5L5 7.75V10H7.25L12.5 4.75zM13.72 3.53a.75.75 0 0 0 0-1.06L12.53 1.28a.75.75 0 0 0-1.06 0L10.75 2 13 4.25z" stroke="#000" stroke-width=".25"/><path d="M6.94 9.25H6.5V8.5H5.75V8.06L6.66 7.16 7.84 8.34z" fill="#fff"/><path d="M7.5 6.5L10.25 3.75" stroke="#fff" stroke-width=".35"/></svg><span class="us">_</span></td></tr>
<tr style="--d:0.58px"><td>24</td><td><svg class="ed" width="13" height="13" viewBox="0 0 14 14"><path d="M9.5 1.6Q9.1 1.5 8.75 1.5H2.25Q.5 1.5 .5 3.25V9.75Q.5 11.5 2.25 11.5H8.75Q10.5 11.5 10.5 9.75V8.5" fill="none" stroke="#000" stroke-width="1.18" stroke-linecap="round"/><path d="M10.25 2.5L5 7.75V10H7.25L12.5 4.75zM13.72 3.53a.75.75 0 0 0 0-1.06L12.53 1.28a.75.75 0 0 0-1.06 0L10.75 2 13 4.25z" stroke="#000" stroke-width=".25"/><path d="M6.94 9.25H6.5V8.5H5.75V8.06L6.66 7.16 7.84 8.34z" fill="#fff"/><path d="M7.5 6.5L10.25 3.75" stroke="#fff" stroke-width=".35"/></svg>Persona Fisica</td><td><svg class="ed" width="13" height="13" viewBox="0 0 14 14"><path d="M9.5 1.6Q9.1 1.5 8.75 1.5H2.25Q.5 1.5 .5 3.25V9.75Q.5 11.5 2.25 11.5H8.75Q10.5 11.5 10.5 9.75V8.5" fill="none" stroke="#000" stroke-width="1.18" stroke-linecap="round"/><path d="M10.25 2.5L5 7.75V10H7.25L12.5 4.75zM13.72 3.53a.75.75 0 0 0 0-1.06L12.53 1.28a.75.75 0 0 0-1.06 0L10.75 2 13 4.25z" stroke="#000" stroke-width=".25"/><path d="M6.94 9.25H6.5V8.5H5.75V8.06L6.66 7.16 7.84 8.34z" fill="#fff"/><path d="M7.5 6.5L10.25 3.75" stroke="#fff" stroke-width=".35"/></svg>Persona Física, Entidad</td><td><svg class="zm" width="13.2" height="13" viewBox="0 0 13.2 13"><circle cx="4.95" cy="5.5" r="4.1" fill="#fff" stroke="#2a2a2a" stroke-width="1"/><path d="M4.95 3.1V7.9M2.55 5.5H7.35" stroke="#000" stroke-width="1.1" fill="none"/><path d="M8.3 8.7L11.6 12.2" stroke="#333" stroke-width="2.1" stroke-linecap="round"/></svg>11111111H</td><td><span class="us">_</span></td><td><svg class="ed" width="13" height="13" viewBox="0 0 14 14"><path d="M9.5 1.6Q9.1 1.5 8.75 1.5H2.25Q.5 1.5 .5 3.25V9.75Q.5 11.5 2.25 11.5H8.75Q10.5 11.5 10.5 9.75V8.5" fill="none" stroke="#000" stroke-width="1.18" stroke-linecap="round"/><path d="M10.25 2.5L5 7.75V10H7.25L12.5 4.75zM13.72 3.53a.75.75 0 0 0 0-1.06L12.53 1.28a.75.75 0 0 0-1.06 0L10.75 2 13 4.25z" stroke="#000" stroke-width=".25"/><path d="M6.94 9.25H6.5V8.5H5.75V8.06L6.66 7.16 7.84 8.34z" fill="#fff"/><path d="M7.5 6.5L10.25 3.75" stroke="#fff" stroke-width=".35"/></svg><span class="us">_</span></td><td><svg class="ed" width="13" height="13" viewBox="0 0 14 14"><path d="M9.5 1.6Q9.1 1.5 8.75 1.5H2.25Q.5 1.5 .5 3.25V9.75Q.5 11.5 2.25 11.5H8.75Q10.5 11.5 10.5 9.75V8.5" fill="none" stroke="#000" stroke-width="1.18" stroke-linecap="round"/><path d="M10.25 2.5L5 7.75V10H7.25L12.5 4.75zM13.72 3.53a.75.75 0 0 0 0-1.06L12.53 1.28a.75.75 0 0 0-1.06 0L10.75 2 13 4.25z" stroke="#000" stroke-width=".25"/><path d="M6.94 9.25H6.5V8.5H5.75V8.06L6.66 7.16 7.84 8.34z" fill="#fff"/><path d="M7.5 6.5L10.25 3.75" stroke="#fff" stroke-width=".35"/></svg><span class="us">_</span></td><td><svg class="ed" width="13" height="13" viewBox="0 0 14 14"><path d="M9.5 1.6Q9.1 1.5 8.75 1.5H2.25Q.5 1.5 .5 3.25V9.75Q.5 11.5 2.25 11.5H8.75Q10.5 11.5 10.5 9.75V8.5" fill="none" stroke="#000" stroke-width="1.18" stroke-linecap="round"/><path d="M10.25 2.5L5 7.75V10H7.25L12.5 4.75zM13.72 3.53a.75.75 0 0 0 0-1.06L12.53 1.28a.75.75 0 0 0-1.06 0L10.75 2 13 4.25z" stroke="#000" stroke-width=".25"/><path d="M6.94 9.25H6.5V8.5H5.75V8.06L6.66 7.16 7.84 8.34z" fill="#fff"/><path d="M7.5 6.5L10.25 3.75" stroke="#fff" stroke-width=".35"/></svg><span class="us">_</span></td></tr>
<tr style="--d:0.02px"><td>21</td><td><svg class="ed" width="13" height="13" viewBox="0 0 14 14"><path d="M9.5 1.6Q9.1 1.5 8.75 1.5H2.25Q.5 1.5 .5 3.25V9.75Q.5 11.5 2.25 11.5H8.75Q10.5 11.5 10.5 9.75V8.5" fill="none" stroke="#000" stroke-width="1.18" stroke-linecap="round"/><path d="M10.25 2.5L5 7.75V10H7.25L12.5 4.75zM13.72 3.53a.75.75 0 0 0 0-1.06L12.53 1.28a.75.75 0 0 0-1.06 0L10.75 2 13 4.25z" stroke="#000" stroke-width=".25"/><path d="M6.94 9.25H6.5V8.5H5.75V8.06L6.66 7.16 7.84 8.34z" fill="#fff"/><path d="M7.5 6.5L10.25 3.75" stroke="#fff" stroke-width=".35"/></svg>Persona Fisica</td><td><svg class="ed" width="13" height="13" viewBox="0 0 14 14"><path d="M9.5 1.6Q9.1 1.5 8.75 1.5H2.25Q.5 1.5 .5 3.25V9.75Q.5 11.5 2.25 11.5H8.75Q10.5 11.5 10.5 9.75V8.5" fill="none" stroke="#000" stroke-width="1.18" stroke-linecap="round"/><path d="M10.25 2.5L5 7.75V10H7.25L12.5 4.75zM13.72 3.53a.75.75 0 0 0 0-1.06L12.53 1.28a.75.75 0 0 0-1.06 0L10.75 2 13 4.25z" stroke="#000" stroke-width=".25"/><path d="M6.94 9.25H6.5V8.5H5.75V8.06L6.66 7.16 7.84 8.34z" fill="#fff"/><path d="M7.5 6.5L10.25 3.75" stroke="#fff" stroke-width=".35"/></svg>Profesor Gómez López</td><td><svg class="zm" width="13.2" height="13" viewBox="0 0 13.2 13"><circle cx="4.95" cy="5.5" r="4.1" fill="#fff" stroke="#2a2a2a" stroke-width="1"/><path d="M4.95 3.1V7.9M2.55 5.5H7.35" stroke="#000" stroke-width="1.1" fill="none"/><path d="M8.3 8.7L11.6 12.2" stroke="#333" stroke-width="2.1" stroke-linecap="round"/></svg>12345679S</td><td><span class="us">_</span></td><td><svg class="ed" width="13" height="13" viewBox="0 0 14 14"><path d="M9.5 1.6Q9.1 1.5 8.75 1.5H2.25Q.5 1.5 .5 3.25V9.75Q.5 11.5 2.25 11.5H8.75Q10.5 11.5 10.5 9.75V8.5" fill="none" stroke="#000" stroke-width="1.18" stroke-linecap="round"/><path d="M10.25 2.5L5 7.75V10H7.25L12.5 4.75zM13.72 3.53a.75.75 0 0 0 0-1.06L12.53 1.28a.75.75 0 0 0-1.06 0L10.75 2 13 4.25z" stroke="#000" stroke-width=".25"/><path d="M6.94 9.25H6.5V8.5H5.75V8.06L6.66 7.16 7.84 8.34z" fill="#fff"/><path d="M7.5 6.5L10.25 3.75" stroke="#fff" stroke-width=".35"/></svg><span class="us">_</span></td><td><svg class="ed" width="13" height="13" viewBox="0 0 14 14"><path d="M9.5 1.6Q9.1 1.5 8.75 1.5H2.25Q.5 1.5 .5 3.25V9.75Q.5 11.5 2.25 11.5H8.75Q10.5 11.5 10.5 9.75V8.5" fill="none" stroke="#000" stroke-width="1.18" stroke-linecap="round"/><path d="M10.25 2.5L5 7.75V10H7.25L12.5 4.75zM13.72 3.53a.75.75 0 0 0 0-1.06L12.53 1.28a.75.75 0 0 0-1.06 0L10.75 2 13 4.25z" stroke="#000" stroke-width=".25"/><path d="M6.94 9.25H6.5V8.5H5.75V8.06L6.66 7.16 7.84 8.34z" fill="#fff"/><path d="M7.5 6.5L10.25 3.75" stroke="#fff" stroke-width=".35"/></svg><span class="us">_</span></td><td><div class="ind">Investigador</div><div style="--d:0.45px"><svg class="ed" width="13" height="13" viewBox="0 0 14 14"><path d="M9.5 1.6Q9.1 1.5 8.75 1.5H2.25Q.5 1.5 .5 3.25V9.75Q.5 11.5 2.25 11.5H8.75Q10.5 11.5 10.5 9.75V8.5" fill="none" stroke="#000" stroke-width="1.18" stroke-linecap="round"/><path d="M10.25 2.5L5 7.75V10H7.25L12.5 4.75zM13.72 3.53a.75.75 0 0 0 0-1.06L12.53 1.28a.75.75 0 0 0-1.06 0L10.75 2 13 4.25z" stroke="#000" stroke-width=".25"/><path d="M6.94 9.25H6.5V8.5H5.75V8.06L6.66 7.16 7.84 8.34z" fill="#fff"/><path d="M7.5 6.5L10.25 3.75" stroke="#fff" stroke-width=".35"/></svg>Universidad/Departamento</div></td></tr>
<tr style="--d:-0.11px"><td>45</td><td><svg class="ed" width="13" height="13" viewBox="0 0 14 14"><path d="M9.5 1.6Q9.1 1.5 8.75 1.5H2.25Q.5 1.5 .5 3.25V9.75Q.5 11.5 2.25 11.5H8.75Q10.5 11.5 10.5 9.75V8.5" fill="none" stroke="#000" stroke-width="1.18" stroke-linecap="round"/><path d="M10.25 2.5L5 7.75V10H7.25L12.5 4.75zM13.72 3.53a.75.75 0 0 0 0-1.06L12.53 1.28a.75.75 0 0 0-1.06 0L10.75 2 13 4.25z" stroke="#000" stroke-width=".25"/><path d="M6.94 9.25H6.5V8.5H5.75V8.06L6.66 7.16 7.84 8.34z" fill="#fff"/><path d="M7.5 6.5L10.25 3.75" stroke="#fff" stroke-width=".35"/></svg>Persona Juridica</td><td><svg class="ed" width="13" height="13" viewBox="0 0 14 14"><path d="M9.5 1.6Q9.1 1.5 8.75 1.5H2.25Q.5 1.5 .5 3.25V9.75Q.5 11.5 2.25 11.5H8.75Q10.5 11.5 10.5 9.75V8.5" fill="none" stroke="#000" stroke-width="1.18" stroke-linecap="round"/><path d="M10.25 2.5L5 7.75V10H7.25L12.5 4.75zM13.72 3.53a.75.75 0 0 0 0-1.06L12.53 1.28a.75.75 0 0 0-1.06 0L10.75 2 13 4.25z" stroke="#000" stroke-width=".25"/><path d="M6.94 9.25H6.5V8.5H5.75V8.06L6.66 7.16 7.84 8.34z" fill="#fff"/><path d="M7.5 6.5L10.25 3.75" stroke="#fff" stroke-width=".35"/></svg>Proveedor de Servicios Varios</td><td><svg class="zm" width="13.2" height="13" viewBox="0 0 13.2 13"><circle cx="4.95" cy="5.5" r="4.1" fill="#fff" stroke="#2a2a2a" stroke-width="1"/><path d="M4.95 3.1V7.9M2.55 5.5H7.35" stroke="#000" stroke-width="1.1" fill="none"/><path d="M8.3 8.7L11.6 12.2" stroke="#333" stroke-width="2.1" stroke-linecap="round"/></svg>B15026693</td><td><span class="us">_</span></td><td><svg class="ed" width="13" height="13" viewBox="0 0 14 14"><path d="M9.5 1.6Q9.1 1.5 8.75 1.5H2.25Q.5 1.5 .5 3.25V9.75Q.5 11.5 2.25 11.5H8.75Q10.5 11.5 10.5 9.75V8.5" fill="none" stroke="#000" stroke-width="1.18" stroke-linecap="round"/><path d="M10.25 2.5L5 7.75V10H7.25L12.5 4.75zM13.72 3.53a.75.75 0 0 0 0-1.06L12.53 1.28a.75.75 0 0 0-1.06 0L10.75 2 13 4.25z" stroke="#000" stroke-width=".25"/><path d="M6.94 9.25H6.5V8.5H5.75V8.06L6.66 7.16 7.84 8.34z" fill="#fff"/><path d="M7.5 6.5L10.25 3.75" stroke="#fff" stroke-width=".35"/></svg><span class="us">_</span></td><td><svg class="ed" width="13" height="13" viewBox="0 0 14 14"><path d="M9.5 1.6Q9.1 1.5 8.75 1.5H2.25Q.5 1.5 .5 3.25V9.75Q.5 11.5 2.25 11.5H8.75Q10.5 11.5 10.5 9.75V8.5" fill="none" stroke="#000" stroke-width="1.18" stroke-linecap="round"/><path d="M10.25 2.5L5 7.75V10H7.25L12.5 4.75zM13.72 3.53a.75.75 0 0 0 0-1.06L12.53 1.28a.75.75 0 0 0-1.06 0L10.75 2 13 4.25z" stroke="#000" stroke-width=".25"/><path d="M6.94 9.25H6.5V8.5H5.75V8.06L6.66 7.16 7.84 8.34z" fill="#fff"/><path d="M7.5 6.5L10.25 3.75" stroke="#fff" stroke-width=".35"/></svg><span class="us">_</span></td><td><svg class="ed" width="13" height="13" viewBox="0 0 14 14"><path d="M9.5 1.6Q9.1 1.5 8.75 1.5H2.25Q.5 1.5 .5 3.25V9.75Q.5 11.5 2.25 11.5H8.75Q10.5 11.5 10.5 9.75V8.5" fill="none" stroke="#000" stroke-width="1.18" stroke-linecap="round"/><path d="M10.25 2.5L5 7.75V10H7.25L12.5 4.75zM13.72 3.53a.75.75 0 0 0 0-1.06L12.53 1.28a.75.75 0 0 0-1.06 0L10.75 2 13 4.25z" stroke="#000" stroke-width=".25"/><path d="M6.94 9.25H6.5V8.5H5.75V8.06L6.66 7.16 7.84 8.34z" fill="#fff"/><path d="M7.5 6.5L10.25 3.75" stroke="#fff" stroke-width=".35"/></svg><span class="us">_</span></td></tr>
<tr style="--d:0.33px"><td>37</td><td><svg class="ed" width="13" height="13" viewBox="0 0 14 14"><path d="M9.5 1.6Q9.1 1.5 8.75 1.5H2.25Q.5 1.5 .5 3.25V9.75Q.5 11.5 2.25 11.5H8.75Q10.5 11.5 10.5 9.75V8.5" fill="none" stroke="#000" stroke-width="1.18" stroke-linecap="round"/><path d="M10.25 2.5L5 7.75V10H7.25L12.5 4.75zM13.72 3.53a.75.75 0 0 0 0-1.06L12.53 1.28a.75.75 0 0 0-1.06 0L10.75 2 13 4.25z" stroke="#000" stroke-width=".25"/><path d="M6.94 9.25H6.5V8.5H5.75V8.06L6.66 7.16 7.84 8.34z" fill="#fff"/><path d="M7.5 6.5L10.25 3.75" stroke="#fff" stroke-width=".35"/></svg>Persona Fisica</td><td><svg class="ed" width="13" height="13" viewBox="0 0 14 14"><path d="M9.5 1.6Q9.1 1.5 8.75 1.5H2.25Q.5 1.5 .5 3.25V9.75Q.5 11.5 2.25 11.5H8.75Q10.5 11.5 10.5 9.75V8.5" fill="none" stroke="#000" stroke-width="1.18" stroke-linecap="round"/><path d="M10.25 2.5L5 7.75V10H7.25L12.5 4.75zM13.72 3.53a.75.75 0 0 0 0-1.06L12.53 1.28a.75.75 0 0 0-1.06 0L10.75 2 13 4.25z" stroke="#000" stroke-width=".25"/><path d="M6.94 9.25H6.5V8.5H5.75V8.06L6.66 7.16 7.84 8.34z" fill="#fff"/><path d="M7.5 6.5L10.25 3.75" stroke="#fff" stroke-width=".35"/></svg>Socio, Perez García</td><td><svg class="zm" width="13.2" height="13" viewBox="0 0 13.2 13"><circle cx="4.95" cy="5.5" r="4.1" fill="#fff" stroke="#2a2a2a" stroke-width="1"/><path d="M4.95 3.1V7.9M2.55 5.5H7.35" stroke="#000" stroke-width="1.1" fill="none"/><path d="M8.3 8.7L11.6 12.2" stroke="#333" stroke-width="2.1" stroke-linecap="round"/></svg>12345680Q</td><td><span class="us">_</span></td><td><svg class="ed" width="13" height="13" viewBox="0 0 14 14"><path d="M9.5 1.6Q9.1 1.5 8.75 1.5H2.25Q.5 1.5 .5 3.25V9.75Q.5 11.5 2.25 11.5H8.75Q10.5 11.5 10.5 9.75V8.5" fill="none" stroke="#000" stroke-width="1.18" stroke-linecap="round"/><path d="M10.25 2.5L5 7.75V10H7.25L12.5 4.75zM13.72 3.53a.75.75 0 0 0 0-1.06L12.53 1.28a.75.75 0 0 0-1.06 0L10.75 2 13 4.25z" stroke="#000" stroke-width=".25"/><path d="M6.94 9.25H6.5V8.5H5.75V8.06L6.66 7.16 7.84 8.34z" fill="#fff"/><path d="M7.5 6.5L10.25 3.75" stroke="#fff" stroke-width=".35"/></svg><svg class="zm" width="13.2" height="13" viewBox="0 0 13.2 13"><circle cx="4.95" cy="5.5" r="4.1" fill="#fff" stroke="#2a2a2a" stroke-width="1"/><path d="M4.95 3.1V7.9M2.55 5.5H7.35" stroke="#000" stroke-width="1.1" fill="none"/><path d="M8.3 8.7L11.6 12.2" stroke="#333" stroke-width="2.1" stroke-linecap="round"/></svg>981981981</td><td><svg class="ed" width="13" height="13" viewBox="0 0 14 14"><path d="M9.5 1.6Q9.1 1.5 8.75 1.5H2.25Q.5 1.5 .5 3.25V9.75Q.5 11.5 2.25 11.5H8.75Q10.5 11.5 10.5 9.75V8.5" fill="none" stroke="#000" stroke-width="1.18" stroke-linecap="round"/><path d="M10.25 2.5L5 7.75V10H7.25L12.5 4.75zM13.72 3.53a.75.75 0 0 0 0-1.06L12.53 1.28a.75.75 0 0 0-1.06 0L10.75 2 13 4.25z" stroke="#000" stroke-width=".25"/><path d="M6.94 9.25H6.5V8.5H5.75V8.06L6.66 7.16 7.84 8.34z" fill="#fff"/><path d="M7.5 6.5L10.25 3.75" stroke="#fff" stroke-width=".35"/></svg><span class="us">_</span></td><td><svg class="ed" width="13" height="13" viewBox="0 0 14 14"><path d="M9.5 1.6Q9.1 1.5 8.75 1.5H2.25Q.5 1.5 .5 3.25V9.75Q.5 11.5 2.25 11.5H8.75Q10.5 11.5 10.5 9.75V8.5" fill="none" stroke="#000" stroke-width="1.18" stroke-linecap="round"/><path d="M10.25 2.5L5 7.75V10H7.25L12.5 4.75zM13.72 3.53a.75.75 0 0 0 0-1.06L12.53 1.28a.75.75 0 0 0-1.06 0L10.75 2 13 4.25z" stroke="#000" stroke-width=".25"/><path d="M6.94 9.25H6.5V8.5H5.75V8.06L6.66 7.16 7.84 8.34z" fill="#fff"/><path d="M7.5 6.5L10.25 3.75" stroke="#fff" stroke-width=".35"/></svg><span class="us">_</span></td></tr>
<tr style="--d:-0.23px"><td>4</td><td><svg class="ed" width="13" height="13" viewBox="0 0 14 14"><path d="M9.5 1.6Q9.1 1.5 8.75 1.5H2.25Q.5 1.5 .5 3.25V9.75Q.5 11.5 2.25 11.5H8.75Q10.5 11.5 10.5 9.75V8.5" fill="none" stroke="#000" stroke-width="1.18" stroke-linecap="round"/><path d="M10.25 2.5L5 7.75V10H7.25L12.5 4.75zM13.72 3.53a.75.75 0 0 0 0-1.06L12.53 1.28a.75.75 0 0 0-1.06 0L10.75 2 13 4.25z" stroke="#000" stroke-width=".25"/><path d="M6.94 9.25H6.5V8.5H5.75V8.06L6.66 7.16 7.84 8.34z" fill="#fff"/><path d="M7.5 6.5L10.25 3.75" stroke="#fff" stroke-width=".35"/></svg>Persona Fisica</td><td><svg class="ed" width="13" height="13" viewBox="0 0 14 14"><path d="M9.5 1.6Q9.1 1.5 8.75 1.5H2.25Q.5 1.5 .5 3.25V9.75Q.5 11.5 2.25 11.5H8.75Q10.5 11.5 10.5 9.75V8.5" fill="none" stroke="#000" stroke-width="1.18" stroke-linecap="round"/><path d="M10.25 2.5L5 7.75V10H7.25L12.5 4.75zM13.72 3.53a.75.75 0 0 0 0-1.06L12.53 1.28a.75.75 0 0 0-1.06 0L10.75 2 13 4.25z" stroke="#000" stroke-width=".25"/><path d="M6.94 9.25H6.5V8.5H5.75V8.06L6.66 7.16 7.84 8.34z" fill="#fff"/><path d="M7.5 6.5L10.25 3.75" stroke="#fff" stroke-width=".35"/></svg>Taibo Pérez, José Antonio</td><td><svg class="zm" width="13.2" height="13" viewBox="0 0 13.2 13"><circle cx="4.95" cy="5.5" r="4.1" fill="#fff" stroke="#2a2a2a" stroke-width="1"/><path d="M4.95 3.1V7.9M2.55 5.5H7.35" stroke="#000" stroke-width="1.1" fill="none"/><path d="M8.3 8.7L11.6 12.2" stroke="#333" stroke-width="2.1" stroke-linecap="round"/></svg>76358321T</td><td><span class="us">_</span></td><td><svg class="ed" width="13" height="13" viewBox="0 0 14 14"><path d="M9.5 1.6Q9.1 1.5 8.75 1.5H2.25Q.5 1.5 .5 3.25V9.75Q.5 11.5 2.25 11.5H8.75Q10.5 11.5 10.5 9.75V8.5" fill="none" stroke="#000" stroke-width="1.18" stroke-linecap="round"/><path d="M10.25 2.5L5 7.75V10H7.25L12.5 4.75zM13.72 3.53a.75.75 0 0 0 0-1.06L12.53 1.28a.75.75 0 0 0-1.06 0L10.75 2 13 4.25z" stroke="#000" stroke-width=".25"/><path d="M6.94 9.25H6.5V8.5H5.75V8.06L6.66 7.16 7.84 8.34z" fill="#fff"/><path d="M7.5 6.5L10.25 3.75" stroke="#fff" stroke-width=".35"/></svg><span class="us">_</span></td><td><svg class="ed" width="13" height="13" viewBox="0 0 14 14"><path d="M9.5 1.6Q9.1 1.5 8.75 1.5H2.25Q.5 1.5 .5 3.25V9.75Q.5 11.5 2.25 11.5H8.75Q10.5 11.5 10.5 9.75V8.5" fill="none" stroke="#000" stroke-width="1.18" stroke-linecap="round"/><path d="M10.25 2.5L5 7.75V10H7.25L12.5 4.75zM13.72 3.53a.75.75 0 0 0 0-1.06L12.53 1.28a.75.75 0 0 0-1.06 0L10.75 2 13 4.25z" stroke="#000" stroke-width=".25"/><path d="M6.94 9.25H6.5V8.5H5.75V8.06L6.66 7.16 7.84 8.34z" fill="#fff"/><path d="M7.5 6.5L10.25 3.75" stroke="#fff" stroke-width=".35"/></svg><svg class="zm" width="13.2" height="13" viewBox="0 0 13.2 13"><circle cx="4.95" cy="5.5" r="4.1" fill="#fff" stroke="#2a2a2a" stroke-width="1"/><path d="M4.95 3.1V7.9M2.55 5.5H7.35" stroke="#000" stroke-width="1.1" fill="none"/><path d="M8.3 8.7L11.6 12.2" stroke="#333" stroke-width="2.1" stroke-linecap="round"/></svg>jtaibos@gmail.com</td><td><div class="ind">Becario</div><div class="ind">Candidato</div><div style="--d:0.64px"><svg class="ed" width="13" height="13" viewBox="0 0 14 14"><path d="M9.5 1.6Q9.1 1.5 8.75 1.5H2.25Q.5 1.5 .5 3.25V9.75Q.5 11.5 2.25 11.5H8.75Q10.5 11.5 10.5 9.75V8.5" fill="none" stroke="#000" stroke-width="1.18" stroke-linecap="round"/><path d="M10.25 2.5L5 7.75V10H7.25L12.5 4.75zM13.72 3.53a.75.75 0 0 0 0-1.06L12.53 1.28a.75.75 0 0 0-1.06 0L10.75 2 13 4.25z" stroke="#000" stroke-width=".25"/><path d="M6.94 9.25H6.5V8.5H5.75V8.06L6.66 7.16 7.84 8.34z" fill="#fff"/><path d="M7.5 6.5L10.25 3.75" stroke="#fff" stroke-width=".35"/></svg>Investigador</div></td></tr>
<tr style="--d:0.08px"><td>41</td><td><svg class="ed" width="13" height="13" viewBox="0 0 14 14"><path d="M9.5 1.6Q9.1 1.5 8.75 1.5H2.25Q.5 1.5 .5 3.25V9.75Q.5 11.5 2.25 11.5H8.75Q10.5 11.5 10.5 9.75V8.5" fill="none" stroke="#000" stroke-width="1.18" stroke-linecap="round"/><path d="M10.25 2.5L5 7.75V10H7.25L12.5 4.75zM13.72 3.53a.75.75 0 0 0 0-1.06L12.53 1.28a.75.75 0 0 0-1.06 0L10.75 2 13 4.25z" stroke="#000" stroke-width=".25"/><path d="M6.94 9.25H6.5V8.5H5.75V8.06L6.66 7.16 7.84 8.34z" fill="#fff"/><path d="M7.5 6.5L10.25 3.75" stroke="#fff" stroke-width=".35"/></svg>Persona Juridica</td><td><svg class="ed" width="13" height="13" viewBox="0 0 14 14"><path d="M9.5 1.6Q9.1 1.5 8.75 1.5H2.25Q.5 1.5 .5 3.25V9.75Q.5 11.5 2.25 11.5H8.75Q10.5 11.5 10.5 9.75V8.5" fill="none" stroke="#000" stroke-width="1.18" stroke-linecap="round"/><path d="M10.25 2.5L5 7.75V10H7.25L12.5 4.75zM13.72 3.53a.75.75 0 0 0 0-1.06L12.53 1.28a.75.75 0 0 0-1.06 0L10.75 2 13 4.25z" stroke="#000" stroke-width=".25"/><path d="M6.94 9.25H6.5V8.5H5.75V8.06L6.66 7.16 7.84 8.34z" fill="#fff"/><path d="M7.5 6.5L10.25 3.75" stroke="#fff" stroke-width=".35"/></svg>Taller Automóvil S.L.</td><td><svg class="zm" width="13.2" height="13" viewBox="0 0 13.2 13"><circle cx="4.95" cy="5.5" r="4.1" fill="#fff" stroke="#2a2a2a" stroke-width="1"/><path d="M4.95 3.1V7.9M2.55 5.5H7.35" stroke="#000" stroke-width="1.1" fill="none"/><path d="M8.3 8.7L11.6 12.2" stroke="#333" stroke-width="2.1" stroke-linecap="round"/></svg>B12345674</td><td><span class="us">_</span></td><td><svg class="ed" width="13" height="13" viewBox="0 0 14 14"><path d="M9.5 1.6Q9.1 1.5 8.75 1.5H2.25Q.5 1.5 .5 3.25V9.75Q.5 11.5 2.25 11.5H8.75Q10.5 11.5 10.5 9.75V8.5" fill="none" stroke="#000" stroke-width="1.18" stroke-linecap="round"/><path d="M10.25 2.5L5 7.75V10H7.25L12.5 4.75zM13.72 3.53a.75.75 0 0 0 0-1.06L12.53 1.28a.75.75 0 0 0-1.06 0L10.75 2 13 4.25z" stroke="#000" stroke-width=".25"/><path d="M6.94 9.25H6.5V8.5H5.75V8.06L6.66 7.16 7.84 8.34z" fill="#fff"/><path d="M7.5 6.5L10.25 3.75" stroke="#fff" stroke-width=".35"/></svg><span class="us">_</span></td><td><svg class="ed" width="13" height="13" viewBox="0 0 14 14"><path d="M9.5 1.6Q9.1 1.5 8.75 1.5H2.25Q.5 1.5 .5 3.25V9.75Q.5 11.5 2.25 11.5H8.75Q10.5 11.5 10.5 9.75V8.5" fill="none" stroke="#000" stroke-width="1.18" stroke-linecap="round"/><path d="M10.25 2.5L5 7.75V10H7.25L12.5 4.75zM13.72 3.53a.75.75 0 0 0 0-1.06L12.53 1.28a.75.75 0 0 0-1.06 0L10.75 2 13 4.25z" stroke="#000" stroke-width=".25"/><path d="M6.94 9.25H6.5V8.5H5.75V8.06L6.66 7.16 7.84 8.34z" fill="#fff"/><path d="M7.5 6.5L10.25 3.75" stroke="#fff" stroke-width=".35"/></svg><span class="us">_</span></td><td><div style="--d:0.08px"><svg class="ed" width="13" height="13" viewBox="0 0 14 14"><path d="M9.5 1.6Q9.1 1.5 8.75 1.5H2.25Q.5 1.5 .5 3.25V9.75Q.5 11.5 2.25 11.5H8.75Q10.5 11.5 10.5 9.75V8.5" fill="none" stroke="#000" stroke-width="1.18" stroke-linecap="round"/><path d="M10.25 2.5L5 7.75V10H7.25L12.5 4.75zM13.72 3.53a.75.75 0 0 0 0-1.06L12.53 1.28a.75.75 0 0 0-1.06 0L10.75 2 13 4.25z" stroke="#000" stroke-width=".25"/><path d="M6.94 9.25H6.5V8.5H5.75V8.06L6.66 7.16 7.84 8.34z" fill="#fff"/><path d="M7.5 6.5L10.25 3.75" stroke="#fff" stroke-width=".35"/></svg>Empresa</div></td></tr>
<tr style="--d:0.52px"><td>7</td><td><svg class="ed" width="13" height="13" viewBox="0 0 14 14"><path d="M9.5 1.6Q9.1 1.5 8.75 1.5H2.25Q.5 1.5 .5 3.25V9.75Q.5 11.5 2.25 11.5H8.75Q10.5 11.5 10.5 9.75V8.5" fill="none" stroke="#000" stroke-width="1.18" stroke-linecap="round"/><path d="M10.25 2.5L5 7.75V10H7.25L12.5 4.75zM13.72 3.53a.75.75 0 0 0 0-1.06L12.53 1.28a.75.75 0 0 0-1.06 0L10.75 2 13 4.25z" stroke="#000" stroke-width=".25"/><path d="M6.94 9.25H6.5V8.5H5.75V8.06L6.66 7.16 7.84 8.34z" fill="#fff"/><path d="M7.5 6.5L10.25 3.75" stroke="#fff" stroke-width=".35"/></svg>Persona Juridica</td><td><svg class="ed" width="13" height="13" viewBox="0 0 14 14"><path d="M9.5 1.6Q9.1 1.5 8.75 1.5H2.25Q.5 1.5 .5 3.25V9.75Q.5 11.5 2.25 11.5H8.75Q10.5 11.5 10.5 9.75V8.5" fill="none" stroke="#000" stroke-width="1.18" stroke-linecap="round"/><path d="M10.25 2.5L5 7.75V10H7.25L12.5 4.75zM13.72 3.53a.75.75 0 0 0 0-1.06L12.53 1.28a.75.75 0 0 0-1.06 0L10.75 2 13 4.25z" stroke="#000" stroke-width=".25"/><path d="M6.94 9.25H6.5V8.5H5.75V8.06L6.66 7.16 7.84 8.34z" fill="#fff"/><path d="M7.5 6.5L10.25 3.75" stroke="#fff" stroke-width=".35"/></svg>Universidad Central</td><td><svg class="zm" width="13.2" height="13" viewBox="0 0 13.2 13"><circle cx="4.95" cy="5.5" r="4.1" fill="#fff" stroke="#2a2a2a" stroke-width="1"/><path d="M4.95 3.1V7.9M2.55 5.5H7.35" stroke="#000" stroke-width="1.1" fill="none"/><path d="M8.3 8.7L11.6 12.2" stroke="#333" stroke-width="2.1" stroke-linecap="round"/></svg>Q12345674</td><td>Perez Lopez, Adolfo</td><td><svg class="ed" width="13" height="13" viewBox="0 0 14 14"><path d="M9.5 1.6Q9.1 1.5 8.75 1.5H2.25Q.5 1.5 .5 3.25V9.75Q.5 11.5 2.25 11.5H8.75Q10.5 11.5 10.5 9.75V8.5" fill="none" stroke="#000" stroke-width="1.18" stroke-linecap="round"/><path d="M10.25 2.5L5 7.75V10H7.25L12.5 4.75zM13.72 3.53a.75.75 0 0 0 0-1.06L12.53 1.28a.75.75 0 0 0-1.06 0L10.75 2 13 4.25z" stroke="#000" stroke-width=".25"/><path d="M6.94 9.25H6.5V8.5H5.75V8.06L6.66 7.16 7.84 8.34z" fill="#fff"/><path d="M7.5 6.5L10.25 3.75" stroke="#fff" stroke-width=".35"/></svg><svg class="zm" width="13.2" height="13" viewBox="0 0 13.2 13"><circle cx="4.95" cy="5.5" r="4.1" fill="#fff" stroke="#2a2a2a" stroke-width="1"/><path d="M4.95 3.1V7.9M2.55 5.5H7.35" stroke="#000" stroke-width="1.1" fill="none"/><path d="M8.3 8.7L11.6 12.2" stroke="#333" stroke-width="2.1" stroke-linecap="round"/></svg>981777777777</td><td><svg class="ed" width="13" height="13" viewBox="0 0 14 14"><path d="M9.5 1.6Q9.1 1.5 8.75 1.5H2.25Q.5 1.5 .5 3.25V9.75Q.5 11.5 2.25 11.5H8.75Q10.5 11.5 10.5 9.75V8.5" fill="none" stroke="#000" stroke-width="1.18" stroke-linecap="round"/><path d="M10.25 2.5L5 7.75V10H7.25L12.5 4.75zM13.72 3.53a.75.75 0 0 0 0-1.06L12.53 1.28a.75.75 0 0 0-1.06 0L10.75 2 13 4.25z" stroke="#000" stroke-width=".25"/><path d="M6.94 9.25H6.5V8.5H5.75V8.06L6.66 7.16 7.84 8.34z" fill="#fff"/><path d="M7.5 6.5L10.25 3.75" stroke="#fff" stroke-width=".35"/></svg><svg class="zm" width="13.2" height="13" viewBox="0 0 13.2 13"><circle cx="4.95" cy="5.5" r="4.1" fill="#fff" stroke="#2a2a2a" stroke-width="1"/><path d="M4.95 3.1V7.9M2.55 5.5H7.35" stroke="#000" stroke-width="1.1" fill="none"/><path d="M8.3 8.7L11.6 12.2" stroke="#333" stroke-width="2.1" stroke-linecap="round"/></svg>rector@ucentral.es</td><td><div style="--d:0.52px"><svg class="ed" width="13" height="13" viewBox="0 0 14 14"><path d="M9.5 1.6Q9.1 1.5 8.75 1.5H2.25Q.5 1.5 .5 3.25V9.75Q.5 11.5 2.25 11.5H8.75Q10.5 11.5 10.5 9.75V8.5" fill="none" stroke="#000" stroke-width="1.18" stroke-linecap="round"/><path d="M10.25 2.5L5 7.75V10H7.25L12.5 4.75zM13.72 3.53a.75.75 0 0 0 0-1.06L12.53 1.28a.75.75 0 0 0-1.06 0L10.75 2 13 4.25z" stroke="#000" stroke-width=".25"/><path d="M6.94 9.25H6.5V8.5H5.75V8.06L6.66 7.16 7.84 8.34z" fill="#fff"/><path d="M7.5 6.5L10.25 3.75" stroke="#fff" stroke-width=".35"/></svg>Universidad/Departamento</div></td></tr>
</tbody></table>
<div id="count">17</div>
</body></html>
